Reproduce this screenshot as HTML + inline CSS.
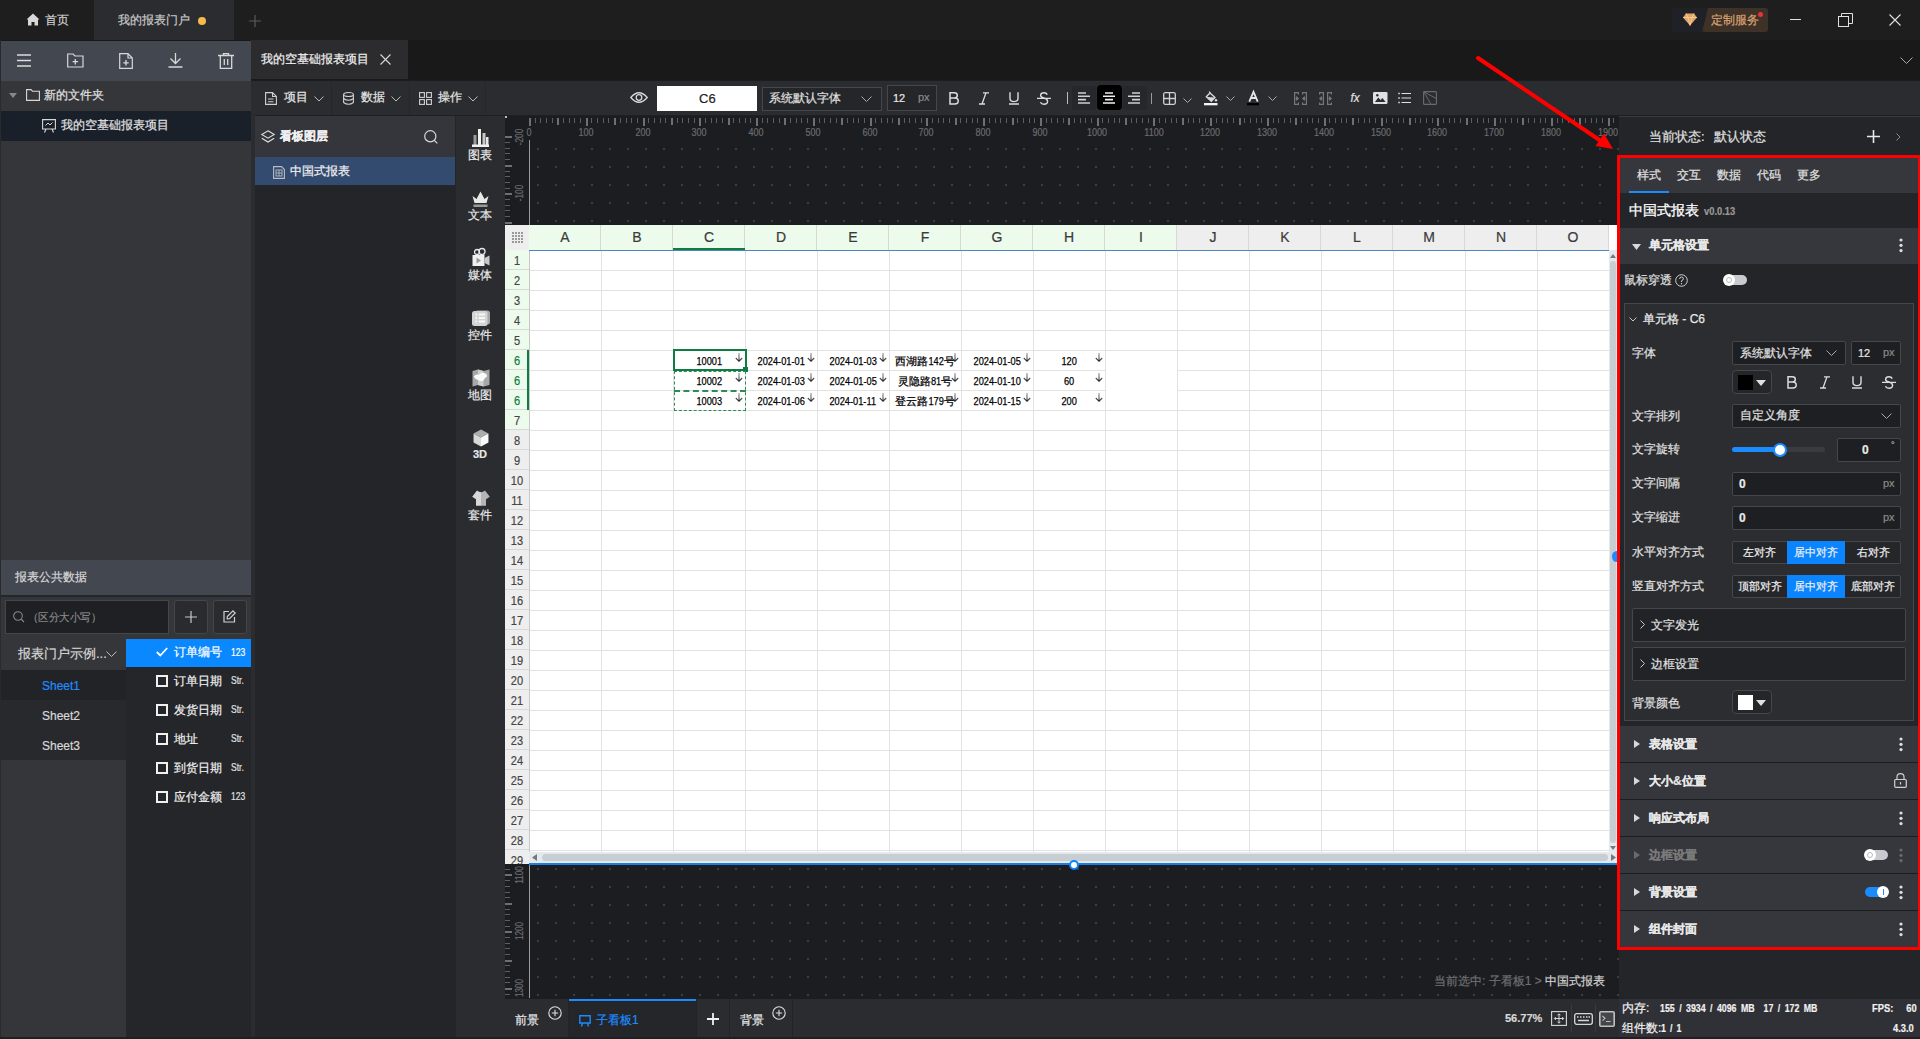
<!DOCTYPE html>
<html><head><meta charset="utf-8">
<style>
*{box-sizing:border-box;margin:0;padding:0}
html,body{width:1920px;height:1039px;overflow:hidden;background:#1c1d20;font-family:"Liberation Sans",sans-serif;font-size:12px;color:#e6e6e6;position:relative}
.a{position:absolute}
.t{position:absolute;white-space:nowrap;line-height:1;-webkit-text-stroke:0.2px currentColor}
svg{position:absolute;overflow:visible}
</style></head><body>
<!-- TITLE BAR -->
<div class="a" style="left:0;top:0;width:1920px;height:40px;background:#1e1e1f"></div>
<div class="a" style="left:94px;top:0;width:140px;height:40px;background:#2b2c30"></div>
<svg style="left:26px;top:13px" width="14" height="13" viewBox="0 0 14 13"><path d="M7 0.5 L13.5 6.5 L12 6.5 L12 12.5 L8.5 12.5 L8.5 9 L5.5 9 L5.5 12.5 L2 12.5 L2 6.5 L0.5 6.5 Z" fill="#d8d8d8"/></svg>
<div class="t" style="left:45px;top:14px;font-size:12px;color:#d0d0d0">首页</div>
<div class="t" style="left:118px;top:14px;font-size:12px;color:#c8c8c8">我的报表门户</div>
<div class="a" style="left:198px;top:17px;width:8px;height:8px;border-radius:50%;background:#f5bb4a"></div>
<svg style="left:249px;top:15px" width="12" height="12" viewBox="0 0 12 12"><path d="M6 0 V12 M0 6 H12" stroke="#5a5a5a" stroke-width="1.2"/></svg>
<div class="a" style="left:1672px;top:8px;width:40px;height:24px;background:#1f2127;border-radius:3px"></div>
<div class="a" style="left:1702px;top:8px;width:66px;height:24px;background:#3d3128;border-radius:3px;clip-path:polygon(6px 0,100% 0,100% 100%,0 100%)"></div>
<svg style="left:1683px;top:13px" width="14" height="13" viewBox="0 0 14 13"><path d="M3 0.5 L11 0.5 L14 4.5 L7 12.5 L0 4.5 Z" fill="#e3a56a"/><path d="M3 0.5 L5 4.5 L7 12.5 L9 4.5 L11 0.5 M0 4.5 L14 4.5" stroke="#f7cf9c" stroke-width="0.8" fill="none"/></svg>
<div class="t" style="left:1711px;top:14px;font-size:12px;color:#d9a474">定制服务</div>
<div class="a" style="left:1758px;top:12px;width:5px;height:5px;border-radius:50%;background:#e8323c"></div>
<div class="a" style="left:1790px;top:19px;width:11px;height:1px;background:#e0e0e0"></div>
<svg style="left:1838px;top:13px" width="15" height="14" viewBox="0 0 15 14"><rect x="0.5" y="3.5" width="10" height="10" fill="none" stroke="#e0e0e0"/><path d="M3.5 3.5 V0.5 H14.5 V10.5 H10.5" fill="none" stroke="#e0e0e0"/></svg>
<svg style="left:1889px;top:14px" width="12" height="12" viewBox="0 0 12 12"><path d="M0.5 0.5 L11.5 11.5 M11.5 0.5 L0.5 11.5" stroke="#e0e0e0" stroke-width="1.1"/></svg>
<!-- ROW2 -->
<div class="a" style="left:0;top:40px;width:1920px;height:40px;background:#19191a"></div>
<div class="a" style="left:251px;top:40px;width:157px;height:39px;background:#2c2c2f"></div>
<div class="t" style="left:261px;top:53px;font-size:12px;color:#f0f0f0">我的空基础报表项目</div>
<svg style="left:380px;top:54px" width="11" height="11" viewBox="0 0 11 11"><path d="M0.5 0.5 L10.5 10.5 M10.5 0.5 L0.5 10.5" stroke="#d8d8d8" stroke-width="1.1"/></svg>
<svg style="left:1900px;top:57px" width="13" height="8" viewBox="0 0 13 8"><path d="M0.5 0.5 L6.5 6.5 L12.5 0.5" stroke="#aaa" fill="none"/></svg>
<!-- TOOLBAR -->
<div class="a" style="left:254px;top:81px;width:1666px;height:34px;background:#2b2c30"></div>
<div class="a" style="left:254px;top:115px;width:1666px;height:1px;background:#1e1f22"></div>
<!-- LEFT PANEL -->
<div class="a" style="left:0;top:40px;width:1px;height:999px;background:#2a2a2c"></div>
<div class="a" style="left:1px;top:41px;width:250px;height:40px;background:#434750"></div>
<div class="a" style="left:1px;top:81px;width:250px;height:479px;background:#35363a"></div>
<div class="a" style="left:1px;top:111px;width:250px;height:30px;background:#19202a"></div>
<!-- left toolbar icons -->
<svg style="left:17px;top:54px" width="15" height="13" viewBox="0 0 15 13"><path d="M0 1 H14 M0 6.5 H14 M0 12 H14" stroke="#dcdcdc" stroke-width="1.3"/></svg>
<svg style="left:67px;top:53px" width="17" height="15" viewBox="0 0 17 15"><path d="M0.7 1 H6 L8 3 H16 V14 H0.7 Z" fill="none" stroke="#d8d8d8" stroke-width="1.2"/><path d="M8.3 6 V11.5 M5.6 8.7 H11" stroke="#d8d8d8" stroke-width="1.3"/></svg>
<svg style="left:119px;top:53px" width="14" height="16" viewBox="0 0 14 16"><path d="M0.7 0.7 H9 L13.3 5 V15.3 H0.7 Z M9 0.7 V5 H13.3" fill="none" stroke="#d8d8d8" stroke-width="1.2"/><path d="M7 7 V12.5 M4.3 9.8 H9.7" stroke="#d8d8d8" stroke-width="1.3"/></svg>
<svg style="left:168px;top:53px" width="15" height="15" viewBox="0 0 15 15"><path d="M7.5 0 V10 M2.5 5.5 L7.5 10.5 L12.5 5.5 M0.5 14 H14.5" fill="none" stroke="#d8d8d8" stroke-width="1.3"/></svg>
<svg style="left:218px;top:53px" width="16" height="16" viewBox="0 0 16 16"><path d="M0 2.5 H16 M5.5 2.5 V0.7 H10.5 V2.5 M2.3 2.5 V15.3 H13.7 V2.5 M6.3 6 V12 M9.7 6 V12" fill="none" stroke="#d8d8d8" stroke-width="1.3"/></svg>
<!-- tree -->
<svg style="left:9px;top:93px" width="8" height="5" viewBox="0 0 8 5"><path d="M0 0 H8 L4 5 Z" fill="#888"/></svg>
<svg style="left:26px;top:89px" width="14" height="12" viewBox="0 0 14 12"><path d="M0.6 0.6 H5 L6.5 2.2 H13.4 V11.4 H0.6 Z" fill="none" stroke="#d8d8d8" stroke-width="1.1"/></svg>
<div class="t" style="left:44px;top:89px;font-size:12px;color:#e0e0e0">新的文件夹</div>
<svg style="left:42px;top:119px" width="14" height="14" viewBox="0 0 14 14"><path d="M0.6 0.6 H13.4 V10 H0.6 Z M4 10 L2.5 13.5 M10 10 L11.5 13.5" fill="none" stroke="#d8d8d8" stroke-width="1.1"/><path d="M3.5 6.5 L6 4 L8 6 L10.5 3.5" fill="none" stroke="#d8d8d8" stroke-width="1"/></svg>
<div class="t" style="left:61px;top:119px;font-size:12px;color:#e0e0e0">我的空基础报表项目</div>
<!-- public data -->
<div class="a" style="left:1px;top:560px;width:250px;height:35px;background:#434750"></div>
<div class="t" style="left:15px;top:571px;font-size:12px;color:#d8d8d8">报表公共数据</div>
<div class="a" style="left:1px;top:595px;width:250px;height:2px;background:#25262a"></div>
<div class="a" style="left:1px;top:597px;width:250px;height:442px;background:#35363a"></div>
<div class="a" style="left:5px;top:600px;width:164px;height:34px;background:#1f2023;border:1px solid #45464b"></div>
<svg style="left:13px;top:611px" width="12" height="12" viewBox="0 0 12 12"><circle cx="5" cy="5" r="4.3" fill="none" stroke="#888" stroke-width="1.1"/><path d="M8.2 8.2 L11 11" stroke="#888" stroke-width="1.1"/></svg>
<div class="t" style="left:28px;top:612px;font-size:11px;color:#8a8a8a;transform:scaleX(0.95);transform-origin:left">（区分大小写）</div>
<div class="a" style="left:174px;top:600px;width:34px;height:34px;background:#2a2b2f;border:1px solid #45464b;border-radius:3px"></div>
<svg style="left:185px;top:611px" width="12" height="12" viewBox="0 0 12 12"><path d="M6 0 V12 M0 6 H12" stroke="#c8c8c8" stroke-width="1.2"/></svg>
<div class="a" style="left:213px;top:600px;width:34px;height:34px;background:#2a2b2f;border:1px solid #45464b;border-radius:3px"></div>
<svg style="left:223px;top:610px" width="13" height="13" viewBox="0 0 13 13"><path d="M6 1.5 H1 V12 H11.5 V7" fill="none" stroke="#d0d0d0" stroke-width="1.2"/><path d="M10 0.8 L12.2 3 L6.5 8.7 L4.2 8.8 L4.3 6.5 Z" fill="none" stroke="#d0d0d0" stroke-width="1.2"/></svg>
<div class="a" style="left:1px;top:639px;width:125px;height:31px;background:#35363a"></div>
<div class="t" style="left:18px;top:647px;font-size:13px;color:#d8d8d8">报表门户示例...</div>
<svg style="left:106px;top:651px" width="11" height="6" viewBox="0 0 11 6"><path d="M0.5 0.5 L5.5 5.5 L10.5 0.5" stroke="#bbb" fill="none"/></svg>
<div class="a" style="left:1px;top:670px;width:125px;height:30px;background:#222327"></div>
<div class="a" style="left:1px;top:700px;width:125px;height:60px;background:#28292d"></div>
<div class="t" style="left:42px;top:680px;font-size:12px;color:#1f8cff">Sheet1</div>
<div class="t" style="left:42px;top:710px;font-size:12px;color:#d8d8d8">Sheet2</div>
<div class="t" style="left:42px;top:740px;font-size:12px;color:#d8d8d8">Sheet3</div>
<div class="a" style="left:126px;top:639px;width:125px;height:400px;background:#25262a"></div>
<div class="a" style="left:126px;top:639px;width:125px;height:28px;background:#0a88ff"></div>
<svg style="left:156px;top:647px" width="12" height="10" viewBox="0 0 12 10"><path d="M0.8 5 L4.3 8.5 L11.2 1" stroke="#fff" stroke-width="1.8" fill="none"/></svg>
<div class="t" style="left:174px;top:646px;font-size:12px;color:#fff">订单编号</div>
<div class="t" style="left:231px;top:647px;font-size:11px;color:#fff;transform:scaleX(0.78);transform-origin:left">123</div>
<div class="a" style="left:156px;top:675px;width:12px;height:12px;border:2px solid #f0f0f0"></div>
<div class="t" style="left:174px;top:675px;font-size:12px;color:#f0f0f0">订单日期</div>
<div class="t" style="left:231px;top:675px;font-size:11px;color:#e0e0e0;transform:scaleX(0.78);transform-origin:left">Str.</div>
<div class="a" style="left:156px;top:704px;width:12px;height:12px;border:2px solid #f0f0f0"></div>
<div class="t" style="left:174px;top:704px;font-size:12px;color:#f0f0f0">发货日期</div>
<div class="t" style="left:231px;top:704px;font-size:11px;color:#e0e0e0;transform:scaleX(0.78);transform-origin:left">Str.</div>
<div class="a" style="left:156px;top:733px;width:12px;height:12px;border:2px solid #f0f0f0"></div>
<div class="t" style="left:174px;top:733px;font-size:12px;color:#f0f0f0">地址</div>
<div class="t" style="left:231px;top:733px;font-size:11px;color:#e0e0e0;transform:scaleX(0.78);transform-origin:left">Str.</div>
<div class="a" style="left:156px;top:762px;width:12px;height:12px;border:2px solid #f0f0f0"></div>
<div class="t" style="left:174px;top:762px;font-size:12px;color:#f0f0f0">到货日期</div>
<div class="t" style="left:231px;top:762px;font-size:11px;color:#e0e0e0;transform:scaleX(0.78);transform-origin:left">Str.</div>
<div class="a" style="left:156px;top:791px;width:12px;height:12px;border:2px solid #f0f0f0"></div>
<div class="t" style="left:174px;top:791px;font-size:12px;color:#f0f0f0">应付金额</div>
<div class="t" style="left:231px;top:791px;font-size:11px;color:#e0e0e0;transform:scaleX(0.78);transform-origin:left">123</div>
<!-- TOOLBAR content -->
<div class="a" style="left:251px;top:81px;width:4px;height:958px;background:#2b2c30"></div>
<svg style="left:265px;top:92px" width="12" height="13" viewBox="0 0 12 13"><path d="M0.6 0.6 H7.5 L11.4 4.5 V12.4 H0.6 Z M7.5 0.6 V4.5 H11.4 M3 7 H8.5 M3 9.7 H8.5" fill="none" stroke="#d0d0d0" stroke-width="1.1"/></svg>
<div class="t" style="left:284px;top:91px;font-size:12px;color:#e6e6e6">项目</div>
<svg style="left:314px;top:96px" width="10" height="6" viewBox="0 0 10 6"><path d="M0.5 0.5 L5 5 L9.5 0.5" stroke="#bbb" fill="none"/></svg>
<div class="a" style="left:331px;top:81px;width:1px;height:34px;background:#26272a"></div>
<svg style="left:343px;top:92px" width="11" height="13" viewBox="0 0 11 13"><ellipse cx="5.5" cy="2.5" rx="4.9" ry="2" fill="none" stroke="#d0d0d0" stroke-width="1.1"/><path d="M0.6 2.5 V10.5 Q5.5 14 10.4 10.5 V2.5 M0.6 6.5 Q5.5 10 10.4 6.5" fill="none" stroke="#d0d0d0" stroke-width="1.1"/></svg>
<div class="t" style="left:361px;top:91px;font-size:12px;color:#e6e6e6">数据</div>
<svg style="left:391px;top:96px" width="10" height="6" viewBox="0 0 10 6"><path d="M0.5 0.5 L5 5 L9.5 0.5" stroke="#bbb" fill="none"/></svg>
<div class="a" style="left:409px;top:81px;width:1px;height:34px;background:#26272a"></div>
<svg style="left:419px;top:92px" width="13" height="13" viewBox="0 0 13 13"><rect x="0.6" y="0.6" width="4.8" height="4.8" fill="none" stroke="#d0d0d0" stroke-width="1.1"/><rect x="7.6" y="0.6" width="4.8" height="4.8" fill="none" stroke="#d0d0d0" stroke-width="1.1"/><rect x="0.6" y="7.6" width="4.8" height="4.8" fill="none" stroke="#d0d0d0" stroke-width="1.1"/><rect x="7.6" y="7.6" width="4.8" height="4.8" fill="none" stroke="#d0d0d0" stroke-width="1.1"/></svg>
<div class="t" style="left:438px;top:91px;font-size:12px;color:#e6e6e6">操作</div>
<svg style="left:468px;top:96px" width="10" height="6" viewBox="0 0 10 6"><path d="M0.5 0.5 L5 5 L9.5 0.5" stroke="#bbb" fill="none"/></svg>
<div class="a" style="left:485px;top:81px;width:1px;height:34px;background:#26272a"></div>
<!-- eye + cell ref -->
<svg style="left:630px;top:91px" width="18" height="13" viewBox="0 0 18 13"><path d="M0.8 6.5 Q9 -3 17.2 6.5 Q9 16 0.8 6.5 Z" fill="none" stroke="#d8d8d8" stroke-width="1.3"/><circle cx="9" cy="6.5" r="2.8" fill="none" stroke="#d8d8d8" stroke-width="1.3"/></svg>
<div class="a" style="left:657px;top:86px;width:100px;height:25px;background:#ffffff"></div>
<div class="t" style="left:699px;top:92px;font-size:13px;color:#222">C6</div>
<div class="a" style="left:762px;top:87px;width:120px;height:24px;border:1px solid #46474c;background:#25262a"></div>
<div class="t" style="left:769px;top:92px;font-size:12px;color:#e0e0e0">系统默认字体</div>
<svg style="left:861px;top:96px" width="11" height="6" viewBox="0 0 11 6"><path d="M0.5 0.5 L5.5 5.5 L10.5 0.5" stroke="#aaa" fill="none"/></svg>
<div class="a" style="left:887px;top:85px;width:50px;height:26px;border:1px solid #46474c;background:#25262a"></div>
<div class="t" style="left:893px;top:93px;font-size:11px;color:#e8e8e8">12</div>
<div class="t" style="left:918px;top:92px;font-size:11px;color:#8a8a8a">px</div>
<svg style="left:949px;top:92px" width="10" height="13" viewBox="0 0 10 13"><path d="M1 0.8 H5.3 Q8.3 0.8 8.3 3.5 Q8.3 6 5.3 6 H1 Z M1 6 H5.8 Q9.2 6 9.2 9 Q9.2 12 5.8 12 H1 Z" fill="none" stroke="#dcdcdc" stroke-width="1.5"/></svg>
<svg style="left:979px;top:92px" width="11" height="13" viewBox="0 0 11 13"><path d="M4 0.8 H10 M0 12 H6 M7 0.8 L3 12" fill="none" stroke="#dcdcdc" stroke-width="1.3"/></svg>
<svg style="left:1009px;top:92px" width="10" height="13" viewBox="0 0 10 13"><path d="M1 0.2 V6.5 Q1 9.6 5 9.6 Q9 9.6 9 6.5 V0.2 M0 12 H10" fill="none" stroke="#dcdcdc" stroke-width="1.4"/></svg>
<svg style="left:1037px;top:92px" width="14" height="13" viewBox="0 0 14 13"><path d="M10.3 2.6 Q9.3 0.7 7 0.7 Q3.6 0.7 3.6 3.2 Q3.6 5.2 7 6 Q10.6 7 10.6 9.3 Q10.6 12.2 7 12.2 Q4.3 12.2 3.4 10.2 M0 6.4 H14" fill="none" stroke="#dcdcdc" stroke-width="1.4"/></svg>
<div class="a" style="left:1067px;top:92px;width:1px;height:12px;background:#bbb"></div>
<div class="a" style="left:1072px;top:86px;width:24px;height:24px;background:#26272b;border-radius:4px"></div>
<div class="a" style="left:1097px;top:85px;width:25px;height:25px;background:#000;border-radius:4px"></div>
<div class="a" style="left:1123px;top:86px;width:24px;height:24px;background:#26272b;border-radius:4px"></div>
<svg style="left:1077px;top:92px" width="14" height="12" viewBox="0 0 14 12"><path d="M1 1 H9 M1 4.3 H13 M1 7.6 H9 M1 11 H13" stroke="#d0d0d0" stroke-width="1.6"/></svg>
<svg style="left:1102px;top:92px" width="14" height="12" viewBox="0 0 14 12"><path d="M3 1 H11 M1 4.3 H13 M3 7.6 H11 M1 11 H13" stroke="#f0f0f0" stroke-width="1.6"/></svg>
<svg style="left:1127px;top:92px" width="14" height="12" viewBox="0 0 14 12"><path d="M5 1 H13 M1 4.3 H13 M5 7.6 H13 M1 11 H13" stroke="#d0d0d0" stroke-width="1.6"/></svg>
<div class="a" style="left:1151px;top:93px;width:1px;height:11px;background:#999"></div>
<svg style="left:1163px;top:92px" width="13" height="13" viewBox="0 0 13 13"><rect x="0.7" y="0.7" width="11.6" height="11.6" rx="1.5" fill="none" stroke="#d0d0d0" stroke-width="1.3"/><path d="M6.5 0.7 V12.3 M0.7 6.5 H12.3" stroke="#d0d0d0" stroke-width="1.3"/></svg>
<svg style="left:1183px;top:98px" width="9" height="5" viewBox="0 0 9 5"><path d="M0.5 0.5 L4.5 4.5 L8.5 0.5" stroke="#aaa" fill="none"/></svg>
<svg style="left:1204px;top:91px" width="14" height="15" viewBox="0 0 14 15"><path d="M5.2 0.5 L6.3 2" stroke="#dcdcdc" stroke-width="1.2"/><path d="M6 2 L11 6.6 L7.3 10.3 L2.3 5.7 Z" fill="none" stroke="#dcdcdc" stroke-width="1.3"/><path d="M2.6 6 L10.7 6.6 L7.3 10 Z" fill="#dcdcdc"/><circle cx="12" cy="9.3" r="1.2" fill="#dcdcdc"/><rect x="0" y="12" width="13.5" height="2.3" fill="#f4f4f4"/></svg>
<svg style="left:1226px;top:96px" width="9" height="5" viewBox="0 0 9 5"><path d="M0.5 0.5 L4.5 4.5 L8.5 0.5" stroke="#aaa" fill="none"/></svg>
<svg style="left:1247px;top:91px" width="13" height="15" viewBox="0 0 13 15"><path d="M2.3 10.6 L6.5 0.8 L10.7 10.6 M4 7 H9" fill="none" stroke="#e6e6e6" stroke-width="1.8"/><rect x="0" y="12" width="12" height="2.3" fill="#000"/></svg>
<svg style="left:1268px;top:96px" width="9" height="5" viewBox="0 0 9 5"><path d="M0.5 0.5 L4.5 4.5 L8.5 0.5" stroke="#aaa" fill="none"/></svg>
<svg style="left:1294px;top:92px" width="13" height="13" viewBox="0 0 13 13"><path d="M4.4 2.6 V0.6 H0.6 V12.4 H4.4 V10.4 M8.6 2.6 V0.6 H12.4 V12.4 H8.6 V10.4" fill="none" stroke="#76777c" stroke-width="1.2"/><path d="M1.4 6.5 H3 M2.6 4.6 L4.6 6.5 L2.6 8.4 Z M11.6 6.5 H10 M10.4 4.6 L8.4 6.5 L10.4 8.4 Z" fill="#76777c" stroke="#76777c" stroke-width="0.9"/></svg>
<svg style="left:1319px;top:92px" width="13" height="13" viewBox="0 0 13 13"><path d="M0.6 2.6 V0.6 H4.4 V12.4 H0.6 V10.4 M12.4 2.6 V0.6 H8.6 V12.4 H12.4 V10.4" fill="none" stroke="#76777c" stroke-width="1.2"/><path d="M3.6 6.5 H2 M2.4 4.6 L0.4 6.5 L2.4 8.4 Z M9.4 6.5 H11 M10.6 4.6 L12.6 6.5 L10.6 8.4 Z" fill="#76777c" stroke="#76777c" stroke-width="0.9"/></svg>
<div class="t" style="left:1350px;top:91px;font-size:13px;color:#e0e0e0;font-style:italic;transform:scaleX(0.9)">fx</div>
<svg style="left:1373px;top:92px" width="15" height="12" viewBox="0 0 15 12"><rect x="0" y="0" width="14.5" height="12" rx="1.2" fill="#e0e0e0"/><path d="M2 10 L5.3 5.5 L7.5 8 L9.5 6 L12.5 10 Z" fill="#2b2c30"/><circle cx="4.3" cy="3.3" r="1.2" fill="#2b2c30"/></svg>
<svg style="left:1398px;top:92px" width="14" height="12" viewBox="0 0 14 12"><path d="M0.3 1.5 H1.8 M0.3 6 H1.8 M0.3 10.5 H1.8" stroke="#e0e0e0" stroke-width="1.4"/><path d="M3.5 1.5 H13 M3.5 6 H13 M3.5 10.5 H13" stroke="#e0e0e0" stroke-width="1.2"/></svg>
<svg style="left:1423px;top:91px" width="14" height="14" viewBox="0 0 14 14"><rect x="0.6" y="0.6" width="12.8" height="12.8" rx="1" fill="none" stroke="#6a6b70" stroke-width="1.1"/><path d="M0.8 0.8 L13.3 7.5 M0.8 0.8 L8 13.3" stroke="#6a6b70" stroke-width="1"/></svg>
<!-- LAYER PANEL -->
<div class="a" style="left:255px;top:116px;width:201px;height:923px;background:#242528"></div>
<div class="a" style="left:255px;top:116px;width:200px;height:41px;background:#35363b"></div>
<svg style="left:261px;top:130px" width="14" height="14" viewBox="0 0 14 14"><path d="M7 0.8 L13.2 4.5 L7 8.2 L0.8 4.5 Z" fill="none" stroke="#e0e0e0" stroke-width="1.1"/><path d="M0.8 8.2 L7 12 L13.2 8.2" fill="none" stroke="#e0e0e0" stroke-width="1.1"/></svg>
<div class="t" style="left:280px;top:130px;font-size:12px;color:#f0f0f0;font-weight:bold">看板图层</div>
<svg style="left:424px;top:130px" width="14" height="14" viewBox="0 0 14 14"><circle cx="6.3" cy="6.3" r="5.6" fill="none" stroke="#d8d8d8" stroke-width="1.2"/><path d="M10.3 10.3 L13.3 13.3" stroke="#d8d8d8" stroke-width="1.2"/></svg>
<div class="a" style="left:255px;top:157px;width:200px;height:28px;background:#344b70"></div>
<svg style="left:273px;top:166px" width="12" height="13" viewBox="0 0 12 13"><path d="M0.6 0.6 H8.5 L11.4 3.5 V12.4 H0.6 Z" fill="none" stroke="#b8bcc4" stroke-width="1.1"/><rect x="3" y="4" width="6" height="6" fill="none" stroke="#b8bcc4" stroke-width="0.9"/><path d="M6 4 V10 M3 7 H9" stroke="#b8bcc4" stroke-width="0.9"/></svg>
<div class="t" style="left:290px;top:165px;font-size:12px;color:#f0f0f0">中国式报表</div>
<!-- ICON STRIP -->
<div class="a" style="left:456px;top:116px;width:49px;height:923px;background:#2b2c30"></div>
<!-- icon strip items -->
<svg style="left:472px;top:128px" width="17" height="19" viewBox="0 0 17 19"><rect x="1.5" y="7" width="3" height="10" fill="#9a9a9a"/><rect x="6" y="1" width="3" height="16" fill="#f0f0f0"/><rect x="10.5" y="5" width="3" height="12" fill="#c8c8c8"/><rect x="14" y="9" width="2.5" height="8" fill="#e8e8e8"/><rect x="0" y="16.5" width="17" height="2.5" fill="#f0f0f0"/></svg>
<div class="t" style="left:468px;top:149px;font-size:12px;color:#e8e8e8">图表</div>
<svg style="left:472px;top:191px" width="17" height="17" viewBox="0 0 17 17"><path d="M0.5 5 L4.5 8 L8.5 0.5 L12.5 8 L16.5 5 L14.5 12 H2.5 Z" fill="#e8e8e8"/><rect x="1.5" y="13.5" width="14" height="2.5" fill="#9a9a9a"/></svg>
<div class="t" style="left:468px;top:209px;font-size:12px;color:#e8e8e8">文本</div>
<svg style="left:472px;top:248px" width="18" height="19" viewBox="0 0 18 19"><circle cx="5" cy="4" r="2.5" fill="none" stroke="#e8e8e8" stroke-width="1.3"/><circle cx="10" cy="3.5" r="3" fill="none" stroke="#e8e8e8" stroke-width="1.3"/><rect x="0.5" y="7" width="12" height="11" fill="#f0f0f0"/><path d="M12.5 10 L17.5 7.5 V17.5 L12.5 15 Z" fill="#c8c8c8"/><path d="M4.5 9.5 L9 12.5 L4.5 15.5 Z" fill="#9a9a9a"/></svg>
<div class="t" style="left:468px;top:269px;font-size:12px;color:#e8e8e8">媒体</div>
<svg style="left:472px;top:310px" width="18" height="16" viewBox="0 0 18 16"><rect x="3" y="0.5" width="15" height="14" rx="2.5" fill="#a8a8a8"/><rect x="0" y="1" width="15.5" height="15" rx="2.5" fill="#d4d4d4"/><path d="M3.5 4.5 H5 M3.5 8 H5 M3.5 11.5 H5 M6.8 4.5 H13 M6.8 8 H13 M6.8 11.5 H13" stroke="#f8f8f8" stroke-width="1.8"/></svg>
<div class="t" style="left:468px;top:329px;font-size:12px;color:#e8e8e8">控件</div>
<svg style="left:472px;top:369px" width="18" height="18" viewBox="0 0 18 18"><path d="M0.5 2 L6 0.5 L11.5 2 L17.5 0.5 V16 L11.5 17.5 L6 16 L0.5 17.5 Z" fill="#a8a8a8"/><path d="M6 0.5 L11.5 2 V17.5 L6 16 Z" fill="#cfcfcf"/><path d="M1.8 7.5 Q3.5 5 7 5.8 Q9.5 3 12.8 4.2 Q15.5 5 14.8 7.8 Q12.5 9 11.5 11.2 Q8.5 13 6.2 11 Q3 10.5 1.8 7.5 Z" fill="#fafafa"/></svg>
<div class="t" style="left:468px;top:389px;font-size:12px;color:#e8e8e8">地图</div>
<svg style="left:473px;top:429px" width="16" height="18" viewBox="0 0 15 16" preserveAspectRatio="none"><path d="M7.5 0.5 L14.5 4 L7.5 7.5 L0.5 4 Z" fill="#acacac"/><path d="M0.5 4 L7.5 7.5 V15.5 L0.5 12 Z" fill="#d8d8d8"/><path d="M14.5 4 L7.5 7.5 V15.5 L14.5 12 Z" fill="#fafafa"/></svg>
<div class="t" style="left:473px;top:449px;font-size:11px;color:#e8e8e8;font-weight:bold">3D</div>
<svg style="left:472px;top:490px" width="18" height="16" viewBox="0 0 18 16"><defs><clipPath id="tsh"><path d="M5 0.5 Q9 3.8 13 0.5 L17.8 6.8 L14 9.2 V15.8 H4 V9.2 L0.2 6.8 Z"/></clipPath></defs><g clip-path="url(#tsh)"><rect x="0" y="0" width="9" height="16" fill="#d8d8d8"/><rect x="9" y="0" width="9" height="16" fill="#b4b4b4"/></g></svg>
<div class="t" style="left:468px;top:509px;font-size:12px;color:#e8e8e8">套件</div>
<div class="a" style="left:505px;top:116px;width:1114px;height:883px;background:#1c1d20"></div>
<svg style="left:530px;top:140px" width="1090" height="859"><defs><pattern id="dp" x="7" y="8" width="18" height="18" patternUnits="userSpaceOnUse"><rect x="0" y="0" width="2" height="2" fill="#3c3d41"/></pattern></defs><rect width="1090" height="859" fill="url(#dp)"/></svg>
<svg style="left:505px;top:116px" width="1112" height="12"><rect x="24" y="2" width="2" height="8" fill="#6e6f73"/><rect x="30" y="2" width="1" height="5" fill="#5d5e62"/><rect x="35" y="2" width="1" height="5" fill="#5d5e62"/><rect x="41" y="2" width="1" height="5" fill="#5d5e62"/><rect x="47" y="2" width="1" height="5" fill="#5d5e62"/><rect x="52" y="2" width="2" height="7" fill="#6e6f73"/><rect x="58" y="2" width="1" height="5" fill="#5d5e62"/><rect x="64" y="2" width="1" height="5" fill="#5d5e62"/><rect x="69" y="2" width="1" height="5" fill="#5d5e62"/><rect x="75" y="2" width="1" height="5" fill="#5d5e62"/><rect x="81" y="2" width="2" height="8" fill="#6e6f73"/><rect x="86" y="2" width="1" height="5" fill="#5d5e62"/><rect x="92" y="2" width="1" height="5" fill="#5d5e62"/><rect x="98" y="2" width="1" height="5" fill="#5d5e62"/><rect x="103" y="2" width="1" height="5" fill="#5d5e62"/><rect x="109" y="2" width="2" height="7" fill="#6e6f73"/><rect x="115" y="2" width="1" height="5" fill="#5d5e62"/><rect x="121" y="2" width="1" height="5" fill="#5d5e62"/><rect x="126" y="2" width="1" height="5" fill="#5d5e62"/><rect x="132" y="2" width="1" height="5" fill="#5d5e62"/><rect x="138" y="2" width="2" height="8" fill="#6e6f73"/><rect x="143" y="2" width="1" height="5" fill="#5d5e62"/><rect x="149" y="2" width="1" height="5" fill="#5d5e62"/><rect x="155" y="2" width="1" height="5" fill="#5d5e62"/><rect x="160" y="2" width="1" height="5" fill="#5d5e62"/><rect x="166" y="2" width="2" height="7" fill="#6e6f73"/><rect x="172" y="2" width="1" height="5" fill="#5d5e62"/><rect x="177" y="2" width="1" height="5" fill="#5d5e62"/><rect x="183" y="2" width="1" height="5" fill="#5d5e62"/><rect x="189" y="2" width="1" height="5" fill="#5d5e62"/><rect x="194" y="2" width="2" height="8" fill="#6e6f73"/><rect x="200" y="2" width="1" height="5" fill="#5d5e62"/><rect x="206" y="2" width="1" height="5" fill="#5d5e62"/><rect x="211" y="2" width="1" height="5" fill="#5d5e62"/><rect x="217" y="2" width="1" height="5" fill="#5d5e62"/><rect x="223" y="2" width="2" height="7" fill="#6e6f73"/><rect x="228" y="2" width="1" height="5" fill="#5d5e62"/><rect x="234" y="2" width="1" height="5" fill="#5d5e62"/><rect x="240" y="2" width="1" height="5" fill="#5d5e62"/><rect x="245" y="2" width="1" height="5" fill="#5d5e62"/><rect x="251" y="2" width="2" height="8" fill="#6e6f73"/><rect x="257" y="2" width="1" height="5" fill="#5d5e62"/><rect x="262" y="2" width="1" height="5" fill="#5d5e62"/><rect x="268" y="2" width="1" height="5" fill="#5d5e62"/><rect x="274" y="2" width="1" height="5" fill="#5d5e62"/><rect x="279" y="2" width="2" height="7" fill="#6e6f73"/><rect x="285" y="2" width="1" height="5" fill="#5d5e62"/><rect x="291" y="2" width="1" height="5" fill="#5d5e62"/><rect x="296" y="2" width="1" height="5" fill="#5d5e62"/><rect x="302" y="2" width="1" height="5" fill="#5d5e62"/><rect x="308" y="2" width="2" height="8" fill="#6e6f73"/><rect x="314" y="2" width="1" height="5" fill="#5d5e62"/><rect x="319" y="2" width="1" height="5" fill="#5d5e62"/><rect x="325" y="2" width="1" height="5" fill="#5d5e62"/><rect x="331" y="2" width="1" height="5" fill="#5d5e62"/><rect x="336" y="2" width="2" height="7" fill="#6e6f73"/><rect x="342" y="2" width="1" height="5" fill="#5d5e62"/><rect x="348" y="2" width="1" height="5" fill="#5d5e62"/><rect x="353" y="2" width="1" height="5" fill="#5d5e62"/><rect x="359" y="2" width="1" height="5" fill="#5d5e62"/><rect x="365" y="2" width="2" height="8" fill="#6e6f73"/><rect x="370" y="2" width="1" height="5" fill="#5d5e62"/><rect x="376" y="2" width="1" height="5" fill="#5d5e62"/><rect x="382" y="2" width="1" height="5" fill="#5d5e62"/><rect x="387" y="2" width="1" height="5" fill="#5d5e62"/><rect x="393" y="2" width="2" height="7" fill="#6e6f73"/><rect x="399" y="2" width="1" height="5" fill="#5d5e62"/><rect x="404" y="2" width="1" height="5" fill="#5d5e62"/><rect x="410" y="2" width="1" height="5" fill="#5d5e62"/><rect x="416" y="2" width="1" height="5" fill="#5d5e62"/><rect x="421" y="2" width="2" height="8" fill="#6e6f73"/><rect x="427" y="2" width="1" height="5" fill="#5d5e62"/><rect x="433" y="2" width="1" height="5" fill="#5d5e62"/><rect x="438" y="2" width="1" height="5" fill="#5d5e62"/><rect x="444" y="2" width="1" height="5" fill="#5d5e62"/><rect x="450" y="2" width="2" height="7" fill="#6e6f73"/><rect x="455" y="2" width="1" height="5" fill="#5d5e62"/><rect x="461" y="2" width="1" height="5" fill="#5d5e62"/><rect x="467" y="2" width="1" height="5" fill="#5d5e62"/><rect x="472" y="2" width="1" height="5" fill="#5d5e62"/><rect x="478" y="2" width="2" height="8" fill="#6e6f73"/><rect x="484" y="2" width="1" height="5" fill="#5d5e62"/><rect x="490" y="2" width="1" height="5" fill="#5d5e62"/><rect x="495" y="2" width="1" height="5" fill="#5d5e62"/><rect x="501" y="2" width="1" height="5" fill="#5d5e62"/><rect x="507" y="2" width="2" height="7" fill="#6e6f73"/><rect x="512" y="2" width="1" height="5" fill="#5d5e62"/><rect x="518" y="2" width="1" height="5" fill="#5d5e62"/><rect x="524" y="2" width="1" height="5" fill="#5d5e62"/><rect x="529" y="2" width="1" height="5" fill="#5d5e62"/><rect x="535" y="2" width="2" height="8" fill="#6e6f73"/><rect x="541" y="2" width="1" height="5" fill="#5d5e62"/><rect x="546" y="2" width="1" height="5" fill="#5d5e62"/><rect x="552" y="2" width="1" height="5" fill="#5d5e62"/><rect x="558" y="2" width="1" height="5" fill="#5d5e62"/><rect x="563" y="2" width="2" height="7" fill="#6e6f73"/><rect x="569" y="2" width="1" height="5" fill="#5d5e62"/><rect x="575" y="2" width="1" height="5" fill="#5d5e62"/><rect x="580" y="2" width="1" height="5" fill="#5d5e62"/><rect x="586" y="2" width="1" height="5" fill="#5d5e62"/><rect x="592" y="2" width="2" height="8" fill="#6e6f73"/><rect x="597" y="2" width="1" height="5" fill="#5d5e62"/><rect x="603" y="2" width="1" height="5" fill="#5d5e62"/><rect x="609" y="2" width="1" height="5" fill="#5d5e62"/><rect x="614" y="2" width="1" height="5" fill="#5d5e62"/><rect x="620" y="2" width="2" height="7" fill="#6e6f73"/><rect x="626" y="2" width="1" height="5" fill="#5d5e62"/><rect x="631" y="2" width="1" height="5" fill="#5d5e62"/><rect x="637" y="2" width="1" height="5" fill="#5d5e62"/><rect x="643" y="2" width="1" height="5" fill="#5d5e62"/><rect x="648" y="2" width="2" height="8" fill="#6e6f73"/><rect x="654" y="2" width="1" height="5" fill="#5d5e62"/><rect x="660" y="2" width="1" height="5" fill="#5d5e62"/><rect x="666" y="2" width="1" height="5" fill="#5d5e62"/><rect x="671" y="2" width="1" height="5" fill="#5d5e62"/><rect x="677" y="2" width="2" height="7" fill="#6e6f73"/><rect x="683" y="2" width="1" height="5" fill="#5d5e62"/><rect x="688" y="2" width="1" height="5" fill="#5d5e62"/><rect x="694" y="2" width="1" height="5" fill="#5d5e62"/><rect x="700" y="2" width="1" height="5" fill="#5d5e62"/><rect x="705" y="2" width="2" height="8" fill="#6e6f73"/><rect x="711" y="2" width="1" height="5" fill="#5d5e62"/><rect x="717" y="2" width="1" height="5" fill="#5d5e62"/><rect x="722" y="2" width="1" height="5" fill="#5d5e62"/><rect x="728" y="2" width="1" height="5" fill="#5d5e62"/><rect x="734" y="2" width="2" height="7" fill="#6e6f73"/><rect x="739" y="2" width="1" height="5" fill="#5d5e62"/><rect x="745" y="2" width="1" height="5" fill="#5d5e62"/><rect x="751" y="2" width="1" height="5" fill="#5d5e62"/><rect x="756" y="2" width="1" height="5" fill="#5d5e62"/><rect x="762" y="2" width="2" height="8" fill="#6e6f73"/><rect x="768" y="2" width="1" height="5" fill="#5d5e62"/><rect x="773" y="2" width="1" height="5" fill="#5d5e62"/><rect x="779" y="2" width="1" height="5" fill="#5d5e62"/><rect x="785" y="2" width="1" height="5" fill="#5d5e62"/><rect x="790" y="2" width="2" height="7" fill="#6e6f73"/><rect x="796" y="2" width="1" height="5" fill="#5d5e62"/><rect x="802" y="2" width="1" height="5" fill="#5d5e62"/><rect x="807" y="2" width="1" height="5" fill="#5d5e62"/><rect x="813" y="2" width="1" height="5" fill="#5d5e62"/><rect x="819" y="2" width="2" height="8" fill="#6e6f73"/><rect x="824" y="2" width="1" height="5" fill="#5d5e62"/><rect x="830" y="2" width="1" height="5" fill="#5d5e62"/><rect x="836" y="2" width="1" height="5" fill="#5d5e62"/><rect x="841" y="2" width="1" height="5" fill="#5d5e62"/><rect x="847" y="2" width="2" height="7" fill="#6e6f73"/><rect x="853" y="2" width="1" height="5" fill="#5d5e62"/><rect x="859" y="2" width="1" height="5" fill="#5d5e62"/><rect x="864" y="2" width="1" height="5" fill="#5d5e62"/><rect x="870" y="2" width="1" height="5" fill="#5d5e62"/><rect x="876" y="2" width="2" height="8" fill="#6e6f73"/><rect x="881" y="2" width="1" height="5" fill="#5d5e62"/><rect x="887" y="2" width="1" height="5" fill="#5d5e62"/><rect x="893" y="2" width="1" height="5" fill="#5d5e62"/><rect x="898" y="2" width="1" height="5" fill="#5d5e62"/><rect x="904" y="2" width="2" height="7" fill="#6e6f73"/><rect x="910" y="2" width="1" height="5" fill="#5d5e62"/><rect x="915" y="2" width="1" height="5" fill="#5d5e62"/><rect x="921" y="2" width="1" height="5" fill="#5d5e62"/><rect x="927" y="2" width="1" height="5" fill="#5d5e62"/><rect x="932" y="2" width="2" height="8" fill="#6e6f73"/><rect x="938" y="2" width="1" height="5" fill="#5d5e62"/><rect x="944" y="2" width="1" height="5" fill="#5d5e62"/><rect x="949" y="2" width="1" height="5" fill="#5d5e62"/><rect x="955" y="2" width="1" height="5" fill="#5d5e62"/><rect x="961" y="2" width="2" height="7" fill="#6e6f73"/><rect x="966" y="2" width="1" height="5" fill="#5d5e62"/><rect x="972" y="2" width="1" height="5" fill="#5d5e62"/><rect x="978" y="2" width="1" height="5" fill="#5d5e62"/><rect x="983" y="2" width="1" height="5" fill="#5d5e62"/><rect x="989" y="2" width="2" height="8" fill="#6e6f73"/><rect x="995" y="2" width="1" height="5" fill="#5d5e62"/><rect x="1000" y="2" width="1" height="5" fill="#5d5e62"/><rect x="1006" y="2" width="1" height="5" fill="#5d5e62"/><rect x="1012" y="2" width="1" height="5" fill="#5d5e62"/><rect x="1017" y="2" width="2" height="7" fill="#6e6f73"/><rect x="1023" y="2" width="1" height="5" fill="#5d5e62"/><rect x="1029" y="2" width="1" height="5" fill="#5d5e62"/><rect x="1035" y="2" width="1" height="5" fill="#5d5e62"/><rect x="1040" y="2" width="1" height="5" fill="#5d5e62"/><rect x="1046" y="2" width="2" height="8" fill="#6e6f73"/><rect x="1052" y="2" width="1" height="5" fill="#5d5e62"/><rect x="1057" y="2" width="1" height="5" fill="#5d5e62"/><rect x="1063" y="2" width="1" height="5" fill="#5d5e62"/><rect x="1069" y="2" width="1" height="5" fill="#5d5e62"/><rect x="1074" y="2" width="2" height="7" fill="#6e6f73"/><rect x="1080" y="2" width="1" height="5" fill="#5d5e62"/><rect x="1086" y="2" width="1" height="5" fill="#5d5e62"/><rect x="1091" y="2" width="1" height="5" fill="#5d5e62"/><rect x="1097" y="2" width="1" height="5" fill="#5d5e62"/><rect x="1103" y="2" width="2" height="8" fill="#6e6f73"/><rect x="1108" y="2" width="1" height="5" fill="#5d5e62"/></svg>
<div class="t" style="left:509.0px;width:40px;text-align:center;top:128px;font-size:10px;color:#6a6b6f;transform:scaleX(0.9)">0</div>
<div class="t" style="left:565.8px;width:40px;text-align:center;top:128px;font-size:10px;color:#6a6b6f;transform:scaleX(0.9)">100</div>
<div class="t" style="left:622.5px;width:40px;text-align:center;top:128px;font-size:10px;color:#6a6b6f;transform:scaleX(0.9)">200</div>
<div class="t" style="left:679.3px;width:40px;text-align:center;top:128px;font-size:10px;color:#6a6b6f;transform:scaleX(0.9)">300</div>
<div class="t" style="left:736.1px;width:40px;text-align:center;top:128px;font-size:10px;color:#6a6b6f;transform:scaleX(0.9)">400</div>
<div class="t" style="left:792.9px;width:40px;text-align:center;top:128px;font-size:10px;color:#6a6b6f;transform:scaleX(0.9)">500</div>
<div class="t" style="left:849.6px;width:40px;text-align:center;top:128px;font-size:10px;color:#6a6b6f;transform:scaleX(0.9)">600</div>
<div class="t" style="left:906.4px;width:40px;text-align:center;top:128px;font-size:10px;color:#6a6b6f;transform:scaleX(0.9)">700</div>
<div class="t" style="left:963.2px;width:40px;text-align:center;top:128px;font-size:10px;color:#6a6b6f;transform:scaleX(0.9)">800</div>
<div class="t" style="left:1019.9px;width:40px;text-align:center;top:128px;font-size:10px;color:#6a6b6f;transform:scaleX(0.9)">900</div>
<div class="t" style="left:1076.7px;width:40px;text-align:center;top:128px;font-size:10px;color:#6a6b6f;transform:scaleX(0.9)">1000</div>
<div class="t" style="left:1133.5px;width:40px;text-align:center;top:128px;font-size:10px;color:#6a6b6f;transform:scaleX(0.9)">1100</div>
<div class="t" style="left:1190.2px;width:40px;text-align:center;top:128px;font-size:10px;color:#6a6b6f;transform:scaleX(0.9)">1200</div>
<div class="t" style="left:1247.0px;width:40px;text-align:center;top:128px;font-size:10px;color:#6a6b6f;transform:scaleX(0.9)">1300</div>
<div class="t" style="left:1303.8px;width:40px;text-align:center;top:128px;font-size:10px;color:#6a6b6f;transform:scaleX(0.9)">1400</div>
<div class="t" style="left:1360.6px;width:40px;text-align:center;top:128px;font-size:10px;color:#6a6b6f;transform:scaleX(0.9)">1500</div>
<div class="t" style="left:1417.3px;width:40px;text-align:center;top:128px;font-size:10px;color:#6a6b6f;transform:scaleX(0.9)">1600</div>
<div class="t" style="left:1474.1px;width:40px;text-align:center;top:128px;font-size:10px;color:#6a6b6f;transform:scaleX(0.9)">1700</div>
<div class="t" style="left:1530.9px;width:40px;text-align:center;top:128px;font-size:10px;color:#6a6b6f;transform:scaleX(0.9)">1800</div>
<div class="t" style="left:1587.6px;width:40px;text-align:center;top:128px;font-size:10px;color:#6a6b6f;transform:scaleX(0.9)">1900</div>
<svg style="left:505px;top:116px" width="12" height="883"><rect x="0" y="20" width="7" height="2" fill="#6e6f73"/><rect x="0" y="26" width="5" height="1" fill="#5d5e62"/><rect x="0" y="32" width="5" height="1" fill="#5d5e62"/><rect x="0" y="37" width="5" height="1" fill="#5d5e62"/><rect x="0" y="43" width="5" height="1" fill="#5d5e62"/><rect x="0" y="49" width="7" height="2" fill="#6e6f73"/><rect x="0" y="55" width="5" height="1" fill="#5d5e62"/><rect x="0" y="60" width="5" height="1" fill="#5d5e62"/><rect x="0" y="66" width="5" height="1" fill="#5d5e62"/><rect x="0" y="72" width="5" height="1" fill="#5d5e62"/><rect x="0" y="77" width="7" height="2" fill="#6e6f73"/><rect x="0" y="83" width="5" height="1" fill="#5d5e62"/><rect x="0" y="89" width="5" height="1" fill="#5d5e62"/><rect x="0" y="94" width="5" height="1" fill="#5d5e62"/><rect x="0" y="100" width="5" height="1" fill="#5d5e62"/><rect x="0" y="106" width="7" height="2" fill="#6e6f73"/><rect x="0" y="753" width="5" height="1" fill="#5d5e62"/><rect x="0" y="758" width="7" height="2" fill="#6e6f73"/><rect x="0" y="764" width="5" height="1" fill="#5d5e62"/><rect x="0" y="770" width="5" height="1" fill="#5d5e62"/><rect x="0" y="776" width="5" height="1" fill="#5d5e62"/><rect x="0" y="781" width="5" height="1" fill="#5d5e62"/><rect x="0" y="787" width="7" height="2" fill="#6e6f73"/><rect x="0" y="793" width="5" height="1" fill="#5d5e62"/><rect x="0" y="798" width="5" height="1" fill="#5d5e62"/><rect x="0" y="804" width="5" height="1" fill="#5d5e62"/><rect x="0" y="810" width="5" height="1" fill="#5d5e62"/><rect x="0" y="815" width="7" height="2" fill="#6e6f73"/><rect x="0" y="821" width="5" height="1" fill="#5d5e62"/><rect x="0" y="827" width="5" height="1" fill="#5d5e62"/><rect x="0" y="832" width="5" height="1" fill="#5d5e62"/><rect x="0" y="838" width="5" height="1" fill="#5d5e62"/><rect x="0" y="844" width="7" height="2" fill="#6e6f73"/><rect x="0" y="849" width="5" height="1" fill="#5d5e62"/><rect x="0" y="855" width="5" height="1" fill="#5d5e62"/><rect x="0" y="861" width="5" height="1" fill="#5d5e62"/><rect x="0" y="866" width="5" height="1" fill="#5d5e62"/><rect x="0" y="872" width="7" height="2" fill="#6e6f73"/><rect x="0" y="878" width="5" height="1" fill="#5d5e62"/></svg>
<div class="t" style="left:500px;top:131.5px;width:40px;height:10px;text-align:center;font-size:10px;color:#6a6b6f;transform:rotate(-90deg) scaleX(0.82)">-200</div>
<div class="t" style="left:500px;top:188.2px;width:40px;height:10px;text-align:center;font-size:10px;color:#6a6b6f;transform:rotate(-90deg) scaleX(0.82)">-100</div>
<div class="t" style="left:500px;top:869.5px;width:40px;height:10px;text-align:center;font-size:10px;color:#6a6b6f;transform:rotate(-90deg) scaleX(0.82)">1100</div>
<div class="t" style="left:500px;top:926.2px;width:40px;height:10px;text-align:center;font-size:10px;color:#6a6b6f;transform:rotate(-90deg) scaleX(0.82)">1200</div>
<div class="t" style="left:500px;top:983.0px;width:40px;height:10px;text-align:center;font-size:10px;color:#6a6b6f;transform:rotate(-90deg) scaleX(0.82)">1300</div>
<div class="a" style="left:505px;top:116px;width:2px;height:2px;background:#bbb"></div>
<div class="a" style="left:529px;top:140px;width:1px;height:85px;background:#9a9a9a"></div>
<div class="a" style="left:529px;top:865px;width:1px;height:133px;background:#9a9a9a"></div>
<div class="a" style="left:505px;top:225px;width:1112px;height:639px;background:#ffffff;overflow:hidden">
<div class="a" style="left:-505px;top:-225px;width:1920px;height:1039px">
<div class="a" style="left:505px;top:225px;width:24px;height:25px;background:#eeeeee"></div>
<svg style="left:512px;top:232px" width="12" height="12"><rect x="0" y="0" width="2" height="2" fill="#9a9a9a"/><rect x="0" y="3" width="2" height="2" fill="#9a9a9a"/><rect x="0" y="6" width="2" height="2" fill="#9a9a9a"/><rect x="0" y="9" width="2" height="2" fill="#9a9a9a"/><rect x="3" y="0" width="2" height="2" fill="#9a9a9a"/><rect x="3" y="3" width="2" height="2" fill="#9a9a9a"/><rect x="3" y="6" width="2" height="2" fill="#9a9a9a"/><rect x="3" y="9" width="2" height="2" fill="#9a9a9a"/><rect x="6" y="0" width="2" height="2" fill="#9a9a9a"/><rect x="6" y="3" width="2" height="2" fill="#9a9a9a"/><rect x="6" y="6" width="2" height="2" fill="#9a9a9a"/><rect x="6" y="9" width="2" height="2" fill="#9a9a9a"/><rect x="9" y="0" width="2" height="2" fill="#9a9a9a"/><rect x="9" y="3" width="2" height="2" fill="#9a9a9a"/><rect x="9" y="6" width="2" height="2" fill="#9a9a9a"/><rect x="9" y="9" width="2" height="2" fill="#9a9a9a"/></svg>
<div class="a" style="left:529px;top:225px;width:72px;height:25px;background:#ecfbec;border-right:1px solid #d8d8d8"></div>
<div class="t" style="left:529px;top:230px;width:72px;text-align:center;font-size:14px;color:#3a3a3a">A</div>
<div class="a" style="left:601px;top:225px;width:72px;height:25px;background:#ecfbec;border-right:1px solid #d8d8d8"></div>
<div class="t" style="left:601px;top:230px;width:72px;text-align:center;font-size:14px;color:#3a3a3a">B</div>
<div class="a" style="left:673px;top:225px;width:72px;height:25px;background:#ecfbec;border-right:1px solid #d8d8d8"></div>
<div class="t" style="left:673px;top:230px;width:72px;text-align:center;font-size:14px;color:#3a3a3a">C</div>
<div class="a" style="left:745px;top:225px;width:72px;height:25px;background:#ecfbec;border-right:1px solid #d8d8d8"></div>
<div class="t" style="left:745px;top:230px;width:72px;text-align:center;font-size:14px;color:#3a3a3a">D</div>
<div class="a" style="left:817px;top:225px;width:72px;height:25px;background:#ecfbec;border-right:1px solid #d8d8d8"></div>
<div class="t" style="left:817px;top:230px;width:72px;text-align:center;font-size:14px;color:#3a3a3a">E</div>
<div class="a" style="left:889px;top:225px;width:72px;height:25px;background:#ecfbec;border-right:1px solid #d8d8d8"></div>
<div class="t" style="left:889px;top:230px;width:72px;text-align:center;font-size:14px;color:#3a3a3a">F</div>
<div class="a" style="left:961px;top:225px;width:72px;height:25px;background:#ecfbec;border-right:1px solid #d8d8d8"></div>
<div class="t" style="left:961px;top:230px;width:72px;text-align:center;font-size:14px;color:#3a3a3a">G</div>
<div class="a" style="left:1033px;top:225px;width:72px;height:25px;background:#ecfbec;border-right:1px solid #d8d8d8"></div>
<div class="t" style="left:1033px;top:230px;width:72px;text-align:center;font-size:14px;color:#3a3a3a">H</div>
<div class="a" style="left:1105px;top:225px;width:72px;height:25px;background:#ecfbec;border-right:1px solid #d8d8d8"></div>
<div class="t" style="left:1105px;top:230px;width:72px;text-align:center;font-size:14px;color:#3a3a3a">I</div>
<div class="a" style="left:1177px;top:225px;width:72px;height:25px;background:#eeeeee;border-right:1px solid #d8d8d8"></div>
<div class="t" style="left:1177px;top:230px;width:72px;text-align:center;font-size:14px;color:#3a3a3a">J</div>
<div class="a" style="left:1249px;top:225px;width:72px;height:25px;background:#eeeeee;border-right:1px solid #d8d8d8"></div>
<div class="t" style="left:1249px;top:230px;width:72px;text-align:center;font-size:14px;color:#3a3a3a">K</div>
<div class="a" style="left:1321px;top:225px;width:72px;height:25px;background:#eeeeee;border-right:1px solid #d8d8d8"></div>
<div class="t" style="left:1321px;top:230px;width:72px;text-align:center;font-size:14px;color:#3a3a3a">L</div>
<div class="a" style="left:1393px;top:225px;width:72px;height:25px;background:#eeeeee;border-right:1px solid #d8d8d8"></div>
<div class="t" style="left:1393px;top:230px;width:72px;text-align:center;font-size:14px;color:#3a3a3a">M</div>
<div class="a" style="left:1465px;top:225px;width:72px;height:25px;background:#eeeeee;border-right:1px solid #d8d8d8"></div>
<div class="t" style="left:1465px;top:230px;width:72px;text-align:center;font-size:14px;color:#3a3a3a">N</div>
<div class="a" style="left:1537px;top:225px;width:72px;height:25px;background:#eeeeee;border-right:1px solid #d8d8d8"></div>
<div class="t" style="left:1537px;top:230px;width:72px;text-align:center;font-size:14px;color:#3a3a3a">O</div>
<div class="a" style="left:673px;top:248px;width:72px;height:2px;background:#107c41"></div>
<svg style="left:529px;top:250px" width="1088" height="614"><rect x="0" y="0" width="1080" height="1" fill="#e2e2e2"/><rect x="0" y="20" width="1080" height="1" fill="#e2e2e2"/><rect x="0" y="40" width="1080" height="1" fill="#e2e2e2"/><rect x="0" y="60" width="1080" height="1" fill="#e2e2e2"/><rect x="0" y="80" width="1080" height="1" fill="#e2e2e2"/><rect x="0" y="100" width="1080" height="1" fill="#e2e2e2"/><rect x="0" y="120" width="1080" height="1" fill="#e2e2e2"/><rect x="0" y="140" width="1080" height="1" fill="#e2e2e2"/><rect x="0" y="160" width="1080" height="1" fill="#e2e2e2"/><rect x="0" y="180" width="1080" height="1" fill="#e2e2e2"/><rect x="0" y="200" width="1080" height="1" fill="#e2e2e2"/><rect x="0" y="220" width="1080" height="1" fill="#e2e2e2"/><rect x="0" y="240" width="1080" height="1" fill="#e2e2e2"/><rect x="0" y="260" width="1080" height="1" fill="#e2e2e2"/><rect x="0" y="280" width="1080" height="1" fill="#e2e2e2"/><rect x="0" y="300" width="1080" height="1" fill="#e2e2e2"/><rect x="0" y="320" width="1080" height="1" fill="#e2e2e2"/><rect x="0" y="340" width="1080" height="1" fill="#e2e2e2"/><rect x="0" y="360" width="1080" height="1" fill="#e2e2e2"/><rect x="0" y="380" width="1080" height="1" fill="#e2e2e2"/><rect x="0" y="400" width="1080" height="1" fill="#e2e2e2"/><rect x="0" y="420" width="1080" height="1" fill="#e2e2e2"/><rect x="0" y="440" width="1080" height="1" fill="#e2e2e2"/><rect x="0" y="460" width="1080" height="1" fill="#e2e2e2"/><rect x="0" y="480" width="1080" height="1" fill="#e2e2e2"/><rect x="0" y="500" width="1080" height="1" fill="#e2e2e2"/><rect x="0" y="520" width="1080" height="1" fill="#e2e2e2"/><rect x="0" y="540" width="1080" height="1" fill="#e2e2e2"/><rect x="0" y="560" width="1080" height="1" fill="#e2e2e2"/><rect x="0" y="580" width="1080" height="1" fill="#e2e2e2"/><rect x="0" y="600" width="1080" height="1" fill="#e2e2e2"/><rect x="0" y="620" width="1080" height="1" fill="#e2e2e2"/><rect x="72" y="0" width="1" height="620" fill="#e2e2e2"/><rect x="144" y="0" width="1" height="620" fill="#e2e2e2"/><rect x="216" y="0" width="1" height="620" fill="#e2e2e2"/><rect x="288" y="0" width="1" height="620" fill="#e2e2e2"/><rect x="360" y="0" width="1" height="620" fill="#e2e2e2"/><rect x="432" y="0" width="1" height="620" fill="#e2e2e2"/><rect x="504" y="0" width="1" height="620" fill="#e2e2e2"/><rect x="576" y="0" width="1" height="620" fill="#e2e2e2"/><rect x="648" y="0" width="1" height="620" fill="#e2e2e2"/><rect x="720" y="0" width="1" height="620" fill="#e2e2e2"/><rect x="792" y="0" width="1" height="620" fill="#e2e2e2"/><rect x="864" y="0" width="1" height="620" fill="#e2e2e2"/><rect x="936" y="0" width="1" height="620" fill="#e2e2e2"/><rect x="1008" y="0" width="1" height="620" fill="#e2e2e2"/><rect x="1080" y="0" width="1" height="620" fill="#e2e2e2"/></svg>
<div class="a" style="left:505px;top:250px;width:24px;height:20px;background:#ecfbec;border-bottom:1px solid #d8d8d8"></div>
<div class="t" style="left:505px;top:254px;width:24px;text-align:center;font-size:13px;color:#444;transform:scaleX(0.85)">1</div>
<div class="a" style="left:505px;top:270px;width:24px;height:20px;background:#ecfbec;border-bottom:1px solid #d8d8d8"></div>
<div class="t" style="left:505px;top:274px;width:24px;text-align:center;font-size:13px;color:#444;transform:scaleX(0.85)">2</div>
<div class="a" style="left:505px;top:290px;width:24px;height:20px;background:#ecfbec;border-bottom:1px solid #d8d8d8"></div>
<div class="t" style="left:505px;top:294px;width:24px;text-align:center;font-size:13px;color:#444;transform:scaleX(0.85)">3</div>
<div class="a" style="left:505px;top:310px;width:24px;height:20px;background:#ecfbec;border-bottom:1px solid #d8d8d8"></div>
<div class="t" style="left:505px;top:314px;width:24px;text-align:center;font-size:13px;color:#444;transform:scaleX(0.85)">4</div>
<div class="a" style="left:505px;top:330px;width:24px;height:20px;background:#ecfbec;border-bottom:1px solid #d8d8d8"></div>
<div class="t" style="left:505px;top:334px;width:24px;text-align:center;font-size:13px;color:#444;transform:scaleX(0.85)">5</div>
<div class="a" style="left:505px;top:350px;width:24px;height:20px;background:#ecfbec;border-bottom:1px solid #d8d8d8"></div>
<div class="t" style="left:505px;top:354px;width:24px;text-align:center;font-size:13px;color:#107c41;transform:scaleX(0.85)">6</div>
<div class="a" style="left:505px;top:370px;width:24px;height:20px;background:#ecfbec;border-bottom:1px solid #d8d8d8"></div>
<div class="t" style="left:505px;top:374px;width:24px;text-align:center;font-size:13px;color:#107c41;transform:scaleX(0.85)">6</div>
<div class="a" style="left:505px;top:390px;width:24px;height:20px;background:#ecfbec;border-bottom:1px solid #d8d8d8"></div>
<div class="t" style="left:505px;top:394px;width:24px;text-align:center;font-size:13px;color:#107c41;transform:scaleX(0.85)">6</div>
<div class="a" style="left:505px;top:410px;width:24px;height:20px;background:#ecfbec;border-bottom:1px solid #d8d8d8"></div>
<div class="t" style="left:505px;top:414px;width:24px;text-align:center;font-size:13px;color:#444;transform:scaleX(0.85)">7</div>
<div class="a" style="left:505px;top:430px;width:24px;height:20px;background:#eeeeee;border-bottom:1px solid #d8d8d8"></div>
<div class="t" style="left:505px;top:434px;width:24px;text-align:center;font-size:13px;color:#444;transform:scaleX(0.85)">8</div>
<div class="a" style="left:505px;top:450px;width:24px;height:20px;background:#eeeeee;border-bottom:1px solid #d8d8d8"></div>
<div class="t" style="left:505px;top:454px;width:24px;text-align:center;font-size:13px;color:#444;transform:scaleX(0.85)">9</div>
<div class="a" style="left:505px;top:470px;width:24px;height:20px;background:#eeeeee;border-bottom:1px solid #d8d8d8"></div>
<div class="t" style="left:505px;top:474px;width:24px;text-align:center;font-size:13px;color:#444;transform:scaleX(0.85)">10</div>
<div class="a" style="left:505px;top:490px;width:24px;height:20px;background:#eeeeee;border-bottom:1px solid #d8d8d8"></div>
<div class="t" style="left:505px;top:494px;width:24px;text-align:center;font-size:13px;color:#444;transform:scaleX(0.85)">11</div>
<div class="a" style="left:505px;top:510px;width:24px;height:20px;background:#eeeeee;border-bottom:1px solid #d8d8d8"></div>
<div class="t" style="left:505px;top:514px;width:24px;text-align:center;font-size:13px;color:#444;transform:scaleX(0.85)">12</div>
<div class="a" style="left:505px;top:530px;width:24px;height:20px;background:#eeeeee;border-bottom:1px solid #d8d8d8"></div>
<div class="t" style="left:505px;top:534px;width:24px;text-align:center;font-size:13px;color:#444;transform:scaleX(0.85)">13</div>
<div class="a" style="left:505px;top:550px;width:24px;height:20px;background:#eeeeee;border-bottom:1px solid #d8d8d8"></div>
<div class="t" style="left:505px;top:554px;width:24px;text-align:center;font-size:13px;color:#444;transform:scaleX(0.85)">14</div>
<div class="a" style="left:505px;top:570px;width:24px;height:20px;background:#eeeeee;border-bottom:1px solid #d8d8d8"></div>
<div class="t" style="left:505px;top:574px;width:24px;text-align:center;font-size:13px;color:#444;transform:scaleX(0.85)">15</div>
<div class="a" style="left:505px;top:590px;width:24px;height:20px;background:#eeeeee;border-bottom:1px solid #d8d8d8"></div>
<div class="t" style="left:505px;top:594px;width:24px;text-align:center;font-size:13px;color:#444;transform:scaleX(0.85)">16</div>
<div class="a" style="left:505px;top:610px;width:24px;height:20px;background:#eeeeee;border-bottom:1px solid #d8d8d8"></div>
<div class="t" style="left:505px;top:614px;width:24px;text-align:center;font-size:13px;color:#444;transform:scaleX(0.85)">17</div>
<div class="a" style="left:505px;top:630px;width:24px;height:20px;background:#eeeeee;border-bottom:1px solid #d8d8d8"></div>
<div class="t" style="left:505px;top:634px;width:24px;text-align:center;font-size:13px;color:#444;transform:scaleX(0.85)">18</div>
<div class="a" style="left:505px;top:650px;width:24px;height:20px;background:#eeeeee;border-bottom:1px solid #d8d8d8"></div>
<div class="t" style="left:505px;top:654px;width:24px;text-align:center;font-size:13px;color:#444;transform:scaleX(0.85)">19</div>
<div class="a" style="left:505px;top:670px;width:24px;height:20px;background:#eeeeee;border-bottom:1px solid #d8d8d8"></div>
<div class="t" style="left:505px;top:674px;width:24px;text-align:center;font-size:13px;color:#444;transform:scaleX(0.85)">20</div>
<div class="a" style="left:505px;top:690px;width:24px;height:20px;background:#eeeeee;border-bottom:1px solid #d8d8d8"></div>
<div class="t" style="left:505px;top:694px;width:24px;text-align:center;font-size:13px;color:#444;transform:scaleX(0.85)">21</div>
<div class="a" style="left:505px;top:710px;width:24px;height:20px;background:#eeeeee;border-bottom:1px solid #d8d8d8"></div>
<div class="t" style="left:505px;top:714px;width:24px;text-align:center;font-size:13px;color:#444;transform:scaleX(0.85)">22</div>
<div class="a" style="left:505px;top:730px;width:24px;height:20px;background:#eeeeee;border-bottom:1px solid #d8d8d8"></div>
<div class="t" style="left:505px;top:734px;width:24px;text-align:center;font-size:13px;color:#444;transform:scaleX(0.85)">23</div>
<div class="a" style="left:505px;top:750px;width:24px;height:20px;background:#eeeeee;border-bottom:1px solid #d8d8d8"></div>
<div class="t" style="left:505px;top:754px;width:24px;text-align:center;font-size:13px;color:#444;transform:scaleX(0.85)">24</div>
<div class="a" style="left:505px;top:770px;width:24px;height:20px;background:#eeeeee;border-bottom:1px solid #d8d8d8"></div>
<div class="t" style="left:505px;top:774px;width:24px;text-align:center;font-size:13px;color:#444;transform:scaleX(0.85)">25</div>
<div class="a" style="left:505px;top:790px;width:24px;height:20px;background:#eeeeee;border-bottom:1px solid #d8d8d8"></div>
<div class="t" style="left:505px;top:794px;width:24px;text-align:center;font-size:13px;color:#444;transform:scaleX(0.85)">26</div>
<div class="a" style="left:505px;top:810px;width:24px;height:20px;background:#eeeeee;border-bottom:1px solid #d8d8d8"></div>
<div class="t" style="left:505px;top:814px;width:24px;text-align:center;font-size:13px;color:#444;transform:scaleX(0.85)">27</div>
<div class="a" style="left:505px;top:830px;width:24px;height:20px;background:#eeeeee;border-bottom:1px solid #d8d8d8"></div>
<div class="t" style="left:505px;top:834px;width:24px;text-align:center;font-size:13px;color:#444;transform:scaleX(0.85)">28</div>
<div class="a" style="left:505px;top:850px;width:24px;height:20px;background:#eeeeee;border-bottom:1px solid #d8d8d8"></div>
<div class="t" style="left:505px;top:854px;width:24px;text-align:center;font-size:13px;color:#444;transform:scaleX(0.85)">29</div>
<div class="a" style="left:529px;top:250px;width:1px;height:614px;background:#c8c8c8"></div>
<div class="a" style="left:527px;top:350px;width:2px;height:60px;background:#107c41"></div>
<div class="a" style="left:529px;top:250px;width:1088px;height:1px;background:#4a86c0"></div>
<div class="t" style="left:673px;top:356px;width:72px;text-align:center;font-size:11px;color:#000;-webkit-text-stroke:0.25px #000"><span style="display:inline-block;transform:scaleX(0.84);margin:0 -2.44px">10001</span></div>
<svg style="left:735px;top:353px" width="8" height="9" viewBox="0 0 8 9"><defs><linearGradient id="ag00" x1="0" y1="0" x2="0" y2="1"><stop offset="0" stop-color="#999"/><stop offset="1" stop-color="#222"/></linearGradient></defs><path d="M4 0 V8.3 M0.8 5 L4 8.3 L7.2 5" fill="none" stroke="url(#ag00)" stroke-width="1.1"/></svg>
<div class="t" style="left:745px;top:356px;width:72px;text-align:center;font-size:11px;color:#000;-webkit-text-stroke:0.25px #000"><span style="display:inline-block;transform:scaleX(0.84);margin:0 -4.88px">2024-01-01</span></div>
<svg style="left:807px;top:353px" width="8" height="9" viewBox="0 0 8 9"><defs><linearGradient id="ag01" x1="0" y1="0" x2="0" y2="1"><stop offset="0" stop-color="#999"/><stop offset="1" stop-color="#222"/></linearGradient></defs><path d="M4 0 V8.3 M0.8 5 L4 8.3 L7.2 5" fill="none" stroke="url(#ag01)" stroke-width="1.1"/></svg>
<div class="t" style="left:817px;top:356px;width:72px;text-align:center;font-size:11px;color:#000;-webkit-text-stroke:0.25px #000"><span style="display:inline-block;transform:scaleX(0.84);margin:0 -4.88px">2024-01-03</span></div>
<svg style="left:879px;top:353px" width="8" height="9" viewBox="0 0 8 9"><defs><linearGradient id="ag02" x1="0" y1="0" x2="0" y2="1"><stop offset="0" stop-color="#999"/><stop offset="1" stop-color="#222"/></linearGradient></defs><path d="M4 0 V8.3 M0.8 5 L4 8.3 L7.2 5" fill="none" stroke="url(#ag02)" stroke-width="1.1"/></svg>
<div class="t" style="left:889px;top:356px;width:72px;text-align:center;font-size:11px;color:#000;-webkit-text-stroke:0.25px #000">西湖路<span style="display:inline-block;transform:scaleX(0.84);margin:0 -1.46px">142</span>号</div>
<svg style="left:951px;top:353px" width="8" height="9" viewBox="0 0 8 9"><defs><linearGradient id="ag03" x1="0" y1="0" x2="0" y2="1"><stop offset="0" stop-color="#999"/><stop offset="1" stop-color="#222"/></linearGradient></defs><path d="M4 0 V8.3 M0.8 5 L4 8.3 L7.2 5" fill="none" stroke="url(#ag03)" stroke-width="1.1"/></svg>
<div class="t" style="left:961px;top:356px;width:72px;text-align:center;font-size:11px;color:#000;-webkit-text-stroke:0.25px #000"><span style="display:inline-block;transform:scaleX(0.84);margin:0 -4.88px">2024-01-05</span></div>
<svg style="left:1023px;top:353px" width="8" height="9" viewBox="0 0 8 9"><defs><linearGradient id="ag04" x1="0" y1="0" x2="0" y2="1"><stop offset="0" stop-color="#999"/><stop offset="1" stop-color="#222"/></linearGradient></defs><path d="M4 0 V8.3 M0.8 5 L4 8.3 L7.2 5" fill="none" stroke="url(#ag04)" stroke-width="1.1"/></svg>
<div class="t" style="left:1033px;top:356px;width:72px;text-align:center;font-size:11px;color:#000;-webkit-text-stroke:0.25px #000"><span style="display:inline-block;transform:scaleX(0.84);margin:0 -1.46px">120</span></div>
<svg style="left:1095px;top:353px" width="8" height="9" viewBox="0 0 8 9"><defs><linearGradient id="ag05" x1="0" y1="0" x2="0" y2="1"><stop offset="0" stop-color="#999"/><stop offset="1" stop-color="#222"/></linearGradient></defs><path d="M4 0 V8.3 M0.8 5 L4 8.3 L7.2 5" fill="none" stroke="url(#ag05)" stroke-width="1.1"/></svg>
<div class="t" style="left:673px;top:376px;width:72px;text-align:center;font-size:11px;color:#000;-webkit-text-stroke:0.25px #000"><span style="display:inline-block;transform:scaleX(0.84);margin:0 -2.44px">10002</span></div>
<svg style="left:735px;top:373px" width="8" height="9" viewBox="0 0 8 9"><defs><linearGradient id="ag10" x1="0" y1="0" x2="0" y2="1"><stop offset="0" stop-color="#999"/><stop offset="1" stop-color="#222"/></linearGradient></defs><path d="M4 0 V8.3 M0.8 5 L4 8.3 L7.2 5" fill="none" stroke="url(#ag10)" stroke-width="1.1"/></svg>
<div class="t" style="left:745px;top:376px;width:72px;text-align:center;font-size:11px;color:#000;-webkit-text-stroke:0.25px #000"><span style="display:inline-block;transform:scaleX(0.84);margin:0 -4.88px">2024-01-03</span></div>
<svg style="left:807px;top:373px" width="8" height="9" viewBox="0 0 8 9"><defs><linearGradient id="ag11" x1="0" y1="0" x2="0" y2="1"><stop offset="0" stop-color="#999"/><stop offset="1" stop-color="#222"/></linearGradient></defs><path d="M4 0 V8.3 M0.8 5 L4 8.3 L7.2 5" fill="none" stroke="url(#ag11)" stroke-width="1.1"/></svg>
<div class="t" style="left:817px;top:376px;width:72px;text-align:center;font-size:11px;color:#000;-webkit-text-stroke:0.25px #000"><span style="display:inline-block;transform:scaleX(0.84);margin:0 -4.88px">2024-01-05</span></div>
<svg style="left:879px;top:373px" width="8" height="9" viewBox="0 0 8 9"><defs><linearGradient id="ag12" x1="0" y1="0" x2="0" y2="1"><stop offset="0" stop-color="#999"/><stop offset="1" stop-color="#222"/></linearGradient></defs><path d="M4 0 V8.3 M0.8 5 L4 8.3 L7.2 5" fill="none" stroke="url(#ag12)" stroke-width="1.1"/></svg>
<div class="t" style="left:889px;top:376px;width:72px;text-align:center;font-size:11px;color:#000;-webkit-text-stroke:0.25px #000">灵隐路<span style="display:inline-block;transform:scaleX(0.84);margin:0 -0.98px">81</span>号</div>
<svg style="left:951px;top:373px" width="8" height="9" viewBox="0 0 8 9"><defs><linearGradient id="ag13" x1="0" y1="0" x2="0" y2="1"><stop offset="0" stop-color="#999"/><stop offset="1" stop-color="#222"/></linearGradient></defs><path d="M4 0 V8.3 M0.8 5 L4 8.3 L7.2 5" fill="none" stroke="url(#ag13)" stroke-width="1.1"/></svg>
<div class="t" style="left:961px;top:376px;width:72px;text-align:center;font-size:11px;color:#000;-webkit-text-stroke:0.25px #000"><span style="display:inline-block;transform:scaleX(0.84);margin:0 -4.88px">2024-01-10</span></div>
<svg style="left:1023px;top:373px" width="8" height="9" viewBox="0 0 8 9"><defs><linearGradient id="ag14" x1="0" y1="0" x2="0" y2="1"><stop offset="0" stop-color="#999"/><stop offset="1" stop-color="#222"/></linearGradient></defs><path d="M4 0 V8.3 M0.8 5 L4 8.3 L7.2 5" fill="none" stroke="url(#ag14)" stroke-width="1.1"/></svg>
<div class="t" style="left:1033px;top:376px;width:72px;text-align:center;font-size:11px;color:#000;-webkit-text-stroke:0.25px #000"><span style="display:inline-block;transform:scaleX(0.84);margin:0 -0.98px">60</span></div>
<svg style="left:1095px;top:373px" width="8" height="9" viewBox="0 0 8 9"><defs><linearGradient id="ag15" x1="0" y1="0" x2="0" y2="1"><stop offset="0" stop-color="#999"/><stop offset="1" stop-color="#222"/></linearGradient></defs><path d="M4 0 V8.3 M0.8 5 L4 8.3 L7.2 5" fill="none" stroke="url(#ag15)" stroke-width="1.1"/></svg>
<div class="t" style="left:673px;top:396px;width:72px;text-align:center;font-size:11px;color:#000;-webkit-text-stroke:0.25px #000"><span style="display:inline-block;transform:scaleX(0.84);margin:0 -2.44px">10003</span></div>
<svg style="left:735px;top:393px" width="8" height="9" viewBox="0 0 8 9"><defs><linearGradient id="ag20" x1="0" y1="0" x2="0" y2="1"><stop offset="0" stop-color="#999"/><stop offset="1" stop-color="#222"/></linearGradient></defs><path d="M4 0 V8.3 M0.8 5 L4 8.3 L7.2 5" fill="none" stroke="url(#ag20)" stroke-width="1.1"/></svg>
<div class="t" style="left:745px;top:396px;width:72px;text-align:center;font-size:11px;color:#000;-webkit-text-stroke:0.25px #000"><span style="display:inline-block;transform:scaleX(0.84);margin:0 -4.88px">2024-01-06</span></div>
<svg style="left:807px;top:393px" width="8" height="9" viewBox="0 0 8 9"><defs><linearGradient id="ag21" x1="0" y1="0" x2="0" y2="1"><stop offset="0" stop-color="#999"/><stop offset="1" stop-color="#222"/></linearGradient></defs><path d="M4 0 V8.3 M0.8 5 L4 8.3 L7.2 5" fill="none" stroke="url(#ag21)" stroke-width="1.1"/></svg>
<div class="t" style="left:817px;top:396px;width:72px;text-align:center;font-size:11px;color:#000;-webkit-text-stroke:0.25px #000"><span style="display:inline-block;transform:scaleX(0.84);margin:0 -4.88px">2024-01-11</span></div>
<svg style="left:879px;top:393px" width="8" height="9" viewBox="0 0 8 9"><defs><linearGradient id="ag22" x1="0" y1="0" x2="0" y2="1"><stop offset="0" stop-color="#999"/><stop offset="1" stop-color="#222"/></linearGradient></defs><path d="M4 0 V8.3 M0.8 5 L4 8.3 L7.2 5" fill="none" stroke="url(#ag22)" stroke-width="1.1"/></svg>
<div class="t" style="left:889px;top:396px;width:72px;text-align:center;font-size:11px;color:#000;-webkit-text-stroke:0.25px #000">登云路<span style="display:inline-block;transform:scaleX(0.84);margin:0 -1.46px">179</span>号</div>
<svg style="left:951px;top:393px" width="8" height="9" viewBox="0 0 8 9"><defs><linearGradient id="ag23" x1="0" y1="0" x2="0" y2="1"><stop offset="0" stop-color="#999"/><stop offset="1" stop-color="#222"/></linearGradient></defs><path d="M4 0 V8.3 M0.8 5 L4 8.3 L7.2 5" fill="none" stroke="url(#ag23)" stroke-width="1.1"/></svg>
<div class="t" style="left:961px;top:396px;width:72px;text-align:center;font-size:11px;color:#000;-webkit-text-stroke:0.25px #000"><span style="display:inline-block;transform:scaleX(0.84);margin:0 -4.88px">2024-01-15</span></div>
<svg style="left:1023px;top:393px" width="8" height="9" viewBox="0 0 8 9"><defs><linearGradient id="ag24" x1="0" y1="0" x2="0" y2="1"><stop offset="0" stop-color="#999"/><stop offset="1" stop-color="#222"/></linearGradient></defs><path d="M4 0 V8.3 M0.8 5 L4 8.3 L7.2 5" fill="none" stroke="url(#ag24)" stroke-width="1.1"/></svg>
<div class="t" style="left:1033px;top:396px;width:72px;text-align:center;font-size:11px;color:#000;-webkit-text-stroke:0.25px #000"><span style="display:inline-block;transform:scaleX(0.84);margin:0 -1.46px">200</span></div>
<svg style="left:1095px;top:393px" width="8" height="9" viewBox="0 0 8 9"><defs><linearGradient id="ag25" x1="0" y1="0" x2="0" y2="1"><stop offset="0" stop-color="#999"/><stop offset="1" stop-color="#222"/></linearGradient></defs><path d="M4 0 V8.3 M0.8 5 L4 8.3 L7.2 5" fill="none" stroke="url(#ag25)" stroke-width="1.1"/></svg>
<div class="a" style="left:1106px;top:370px;width:71px;height:1px;background:#fff"></div>
<div class="a" style="left:1106px;top:390px;width:71px;height:1px;background:#fff"></div>
<div class="a" style="left:673px;top:349px;width:74px;height:22px;border:2px solid #107c41"></div>
<div class="a" style="left:743px;top:367px;width:5px;height:5px;background:#107c41"></div>
<div class="a" style="left:674px;top:371px;width:72px;height:40px;border:1px dashed #2e8b57"></div>
<div class="a" style="left:674px;top:390px;width:72px;height:0;border-top:2px dashed #2e8b57"></div>
<div class="a" style="left:1609px;top:250px;width:8px;height:602px;background:#e3e9ee"></div>
<div class="a" style="left:1610px;top:261px;width:6px;height:582px;background:#c8cdd1;border-radius:3px"></div>
<svg style="left:1610px;top:254px" width="6" height="4"><path d="M0 4 L3 0 L6 4Z" fill="#777"/></svg>
<svg style="left:1610px;top:846px" width="6" height="4"><path d="M0 0 L3 4 L6 0Z" fill="#777"/></svg>
<div class="a" style="left:529px;top:852px;width:1088px;height:12px;background:#e3e9ee"></div>
<div class="a" style="left:542px;top:854px;width:1066px;height:7px;background:#c8cdd1;border-radius:4px"></div>
<svg style="left:532px;top:854px" width="5" height="7"><path d="M5 0 L0 3.5 L5 7Z" fill="#777"/></svg>
<svg style="left:1611px;top:854px" width="5" height="7"><path d="M0 0 L5 3.5 L0 7Z" fill="#777"/></svg>
</div></div>
<div class="a" style="left:529px;top:863px;width:1088px;height:2px;background:#1a7fe0"></div>
<div class="a" style="left:1069px;top:860px;width:10px;height:10px;border-radius:50%;background:#fff;border:2px solid #0a84ff"></div>
<div class="a" style="left:1612px;top:551px;width:9px;height:11px;border-radius:50%;background:#1a8cff"></div>
<div class="t" style="left:1434px;top:975px;font-size:12px;color:#6e6f73">当前选中: 子看板1 &gt; <span style="color:#d0d0d0">中国式报表</span></div>
<div class="a" style="left:505px;top:999px;width:1114px;height:38px;background:#2b2c30"></div>
<div class="a" style="left:505px;top:1037px;width:1114px;height:2px;background:#1e1f22"></div>
<div class="a" style="left:569px;top:999px;width:127px;height:38px;background:#25262a"></div>
<div class="a" style="left:569px;top:999px;width:127px;height:2px;background:#1a8cff"></div>
<div class="a" style="left:568px;top:999px;width:1px;height:38px;background:#232427"></div>
<div class="a" style="left:696px;top:999px;width:1px;height:38px;background:#232427"></div>
<div class="a" style="left:729px;top:999px;width:1px;height:38px;background:#232427"></div>
<div class="a" style="left:792px;top:999px;width:1px;height:38px;background:#232427"></div>
<div class="t" style="left:515px;top:1014px;font-size:12px;color:#e8e8e8">前景</div>
<div class="t" style="left:740px;top:1014px;font-size:12px;color:#e8e8e8">背景</div>
<svg style="left:547.5px;top:1005.5px" width="14" height="14" viewBox="0 0 14 14"><circle cx="7" cy="7" r="6.2" fill="none" stroke="#e0e0e0" stroke-width="1.1"/><path d="M7 3.8 V10.2 M3.8 7 H10.2" stroke="#e0e0e0" stroke-width="1.1"/></svg>
<svg style="left:771.5px;top:1005.5px" width="14" height="14" viewBox="0 0 14 14"><circle cx="7" cy="7" r="6.2" fill="none" stroke="#e0e0e0" stroke-width="1.1"/><path d="M7 3.8 V10.2 M3.8 7 H10.2" stroke="#e0e0e0" stroke-width="1.1"/></svg>
<svg style="left:579px;top:1015px" width="12" height="12" viewBox="0 0 12 12"><path d="M0.8 0.8 H11.2 V8 H0.8 Z M3.5 8 L2.5 11.5 M8.5 8 L9.5 11.5" fill="none" stroke="#1a8cff" stroke-width="1.4"/></svg>
<div class="t" style="left:596px;top:1014px;font-size:12px;color:#1a8cff">子看板1</div>
<svg style="left:707px;top:1013px" width="12" height="12" viewBox="0 0 12 12"><path d="M6 0 V12 M0 6 H12" stroke="#f0f0f0" stroke-width="1.8"/></svg>
<div class="t" style="left:1505px;top:1013px;font-size:11px;color:#d8d8d8;font-weight:bold">56.77%</div>
<svg style="left:1551px;top:1011px" width="16" height="15" viewBox="0 0 16 15"><rect x="0.6" y="0.6" width="14.8" height="13.8" fill="none" stroke="#d8d8d8" stroke-width="1.1"/><path d="M8 3 V12 M3.5 7.5 H12.5" stroke="#d8d8d8" stroke-width="1"/><path d="M6.5 4.3 L8 2.8 L9.5 4.3 M6.5 10.7 L8 12.2 L9.5 10.7 M4.8 6 L3.3 7.5 L4.8 9 M11.2 6 L12.7 7.5 L11.2 9" fill="none" stroke="#d8d8d8" stroke-width="1"/></svg>
<div class="a" style="left:1571px;top:1004px;width:1px;height:28px;background:#3a3b3f"></div>
<svg style="left:1574px;top:1013px" width="19" height="12" viewBox="0 0 19 12"><rect x="0.7" y="0.7" width="17.6" height="10.6" rx="2" fill="none" stroke="#d8d8d8" stroke-width="1.3"/><path d="M3 4 H4.5 M6 4 H7.5 M9 4 H10.5 M12 4 H13.5 M14.5 4 H16 M4 7.5 H15" stroke="#d8d8d8" stroke-width="1.3"/></svg>
<div class="a" style="left:1595px;top:1004px;width:1px;height:28px;background:#3a3b3f"></div>
<svg style="left:1599px;top:1011px" width="16" height="16" viewBox="0 0 16 16"><rect x="0.8" y="0.8" width="14.4" height="14.4" rx="1.2" fill="#45464a" stroke="#c0c0c0" stroke-width="1.6"/><path d="M3.5 5 L6 7.3 L3.5 9.6 M7 10.5 H11.5" fill="none" stroke="#bdbdbd" stroke-width="1.1"/></svg><div class="a" style="left:1619px;top:116px;width:301px;height:883px;background:#242528"></div>
<div class="a" style="left:1619px;top:116px;width:301px;height:1px;background:#3a3b40"></div>
<div class="t" style="left:1649px;top:130px;font-size:13px;color:#e0e0e0">当前状态:<span style="display:inline-block;width:9px"></span>默认状态</div>
<svg style="left:1867px;top:130px" width="13" height="13" viewBox="0 0 13 13"><path d="M6.5 0 V13 M0 6.5 H13" stroke="#e8e8e8" stroke-width="1.6"/></svg>
<svg style="left:1896px;top:133px" width="5" height="8" viewBox="0 0 5 8"><path d="M0.5 0.5 L4 4 L0.5 7.5" stroke="#888" fill="none"/></svg>
<div class="a" style="left:1620px;top:158px;width:298px;height:35px;background:#36373c"></div>
<div class="t" style="left:1637px;top:169px;font-size:12px;color:#e0e0e0">样式</div>
<div class="t" style="left:1677px;top:169px;font-size:12px;color:#e0e0e0">交互</div>
<div class="t" style="left:1717px;top:169px;font-size:12px;color:#e0e0e0">数据</div>
<div class="t" style="left:1757px;top:169px;font-size:12px;color:#e0e0e0">代码</div>
<div class="t" style="left:1797px;top:169px;font-size:12px;color:#e0e0e0">更多</div>
<div class="a" style="left:1629px;top:191px;width:40px;height:2px;background:#1a8cff"></div>
<div class="t" style="left:1629px;top:203px;font-size:14px;color:#fff;-webkit-text-stroke:0.3px #fff">中国式报表</div>
<div class="t" style="left:1704px;top:206px;font-size:11px;color:#9a9a9a;font-weight:bold;transform:scaleX(0.85);transform-origin:left">v0.0.13</div>
<div class="a" style="left:1620px;top:228px;width:298px;height:36px;background:#36373c"></div>
<svg style="left:1632px;top:244px" width="9" height="6"><path d="M0 0 H9 L4.5 6Z" fill="#d8d8d8"/></svg>
<div class="t" style="left:1649px;top:239px;font-size:12px;color:#e8e8e8;font-weight:bold">单元格设置</div>
<svg style="left:1898.5px;top:237.5px" width="4" height="15"><circle cx="2" cy="2" r="1.6" fill="#e0e0e0"/><circle cx="2" cy="7.3" r="1.6" fill="#e0e0e0"/><circle cx="2" cy="12.6" r="1.6" fill="#e0e0e0"/></svg>
<div class="t" style="left:1624px;top:274px;font-size:12px;color:#e0e0e0">鼠标穿透</div>
<svg style="left:1675px;top:274px" width="13" height="13" viewBox="0 0 13 13"><circle cx="6.5" cy="6.5" r="5.8" fill="none" stroke="#d0d0d0" stroke-width="1"/><path d="M4.6 5 Q4.6 3 6.5 3 Q8.4 3 8.4 4.8 Q8.4 6 6.5 6.8 V8" fill="none" stroke="#d0d0d0" stroke-width="1"/><circle cx="6.5" cy="9.8" r="0.7" fill="#d0d0d0"/></svg>
<div class="a" style="left:1724px;top:275px;width:23px;height:10px;border-radius:5px;background:#c9cad0"></div>
<div class="a" style="left:1723px;top:274px;width:12px;height:12px;border-radius:50%;background:#fff"></div>
<div class="a" style="left:1726px;top:277px;width:6px;height:6px;border-radius:50%;border:1px solid #bbb"></div>
<div class="a" style="left:1624px;top:303px;width:290px;height:418px;background:#2c2d31;border:1px solid #46474c"></div>
<svg style="left:1629px;top:317px" width="8" height="5"><path d="M0.5 0.5 L4 4 L7.5 0.5" stroke="#c8c8c8" fill="none"/></svg>
<div class="t" style="left:1643px;top:313px;font-size:12px;color:#e8e8e8;-webkit-text-stroke:0.25px #e8e8e8">单元格 - C6</div>
<div class="t" style="left:1632px;top:347px;font-size:12px;color:#e0e0e0">字体</div>
<div class="a" style="left:1732px;top:341px;width:114px;height:24px;background:#1e1f22;border:1px solid #46474c;border-radius:2px"></div>
<div class="t" style="left:1740px;top:347px;font-size:12px;color:#e0e0e0">系统默认字体</div>
<svg style="left:1826px;top:350px" width="11" height="6"><path d="M0.5 0.5 L5.5 5.5 L10.5 0.5" stroke="#aaa" fill="none"/></svg>
<div class="a" style="left:1851px;top:341px;width:50px;height:24px;background:#1e1f22;border:1px solid #46474c;border-radius:2px"></div>
<div class="t" style="left:1858px;top:348px;font-size:11px;color:#e8e8e8">12</div>
<div class="t" style="left:1883px;top:347px;font-size:11px;color:#8a8a8a">px</div>
<div class="a" style="left:1732px;top:370px;width:40px;height:24px;background:#25262a;border:1px solid #46474c;border-radius:4px"></div>
<div class="a" style="left:1738px;top:375px;width:15px;height:15px;background:#000"></div>
<svg style="left:1756px;top:380px" width="10" height="6"><path d="M0 0 H10 L5 6Z" fill="#e0e0e0"/></svg>
<svg style="left:1787px;top:376px" width="10" height="13" viewBox="0 0 10 13"><path d="M1 0.8 H5.3 Q8.3 0.8 8.3 3.5 Q8.3 6 5.3 6 H1 Z M1 6 H5.8 Q9.2 6 9.2 9 Q9.2 12 5.8 12 H1 Z" fill="none" stroke="#dcdcdc" stroke-width="1.5"/></svg>
<svg style="left:1820px;top:376px" width="11" height="13" viewBox="0 0 11 13"><path d="M4 0.8 H10 M0 12 H6 M7 0.8 L3 12" fill="none" stroke="#dcdcdc" stroke-width="1.3"/></svg>
<svg style="left:1852px;top:376px" width="10" height="13" viewBox="0 0 10 13"><path d="M1 0.2 V6.5 Q1 9.6 5 9.6 Q9 9.6 9 6.5 V0.2 M0 12 H10" fill="none" stroke="#dcdcdc" stroke-width="1.4"/></svg>
<svg style="left:1882px;top:376px" width="14" height="13" viewBox="0 0 14 13"><path d="M10.3 2.6 Q9.3 0.7 7 0.7 Q3.6 0.7 3.6 3.2 Q3.6 5.2 7 6 Q10.6 7 10.6 9.3 Q10.6 12.2 7 12.2 Q4.3 12.2 3.4 10.2 M0 6.4 H14" fill="none" stroke="#dcdcdc" stroke-width="1.4"/></svg>
<div class="t" style="left:1632px;top:410px;font-size:12px;color:#e0e0e0">文字排列</div>
<div class="a" style="left:1732px;top:404px;width:169px;height:24px;background:#1e1f22;border:1px solid #46474c;border-radius:2px"></div>
<div class="t" style="left:1740px;top:409px;font-size:12px;color:#e0e0e0">自定义角度</div>
<svg style="left:1881px;top:413px" width="11" height="6"><path d="M0.5 0.5 L5.5 5.5 L10.5 0.5" stroke="#aaa" fill="none"/></svg>
<div class="t" style="left:1632px;top:443px;font-size:12px;color:#e0e0e0">文字旋转</div>
<div class="a" style="left:1732px;top:447px;width:93px;height:5px;border-radius:3px;background:#3a3b40"></div>
<div class="a" style="left:1732px;top:447px;width:48px;height:5px;border-radius:3px;background:#1a8cff"></div>
<div class="a" style="left:1773px;top:443px;width:14px;height:14px;border-radius:50%;background:#fff;border:2px solid #1a8cff"></div>
<div class="a" style="left:1837px;top:438px;width:64px;height:24px;background:#1e1f22;border:1px solid #46474c;border-radius:2px"></div>
<div class="t" style="left:1862px;top:444px;font-size:12px;color:#e8e8e8;font-weight:bold">0</div>
<div class="t" style="left:1891px;top:441px;font-size:9px;color:#bbb">°</div>
<div class="t" style="left:1632px;top:477px;font-size:12px;color:#e0e0e0">文字间隔</div>
<div class="a" style="left:1732px;top:472px;width:169px;height:24px;background:#1e1f22;border:1px solid #46474c;border-radius:2px"></div>
<div class="t" style="left:1739px;top:478px;font-size:12px;color:#e8e8e8;font-weight:bold">0</div>
<div class="t" style="left:1883px;top:478px;font-size:11px;color:#8a8a8a">px</div>
<div class="t" style="left:1632px;top:511px;font-size:12px;color:#e0e0e0">文字缩进</div>
<div class="a" style="left:1732px;top:506px;width:169px;height:24px;background:#1e1f22;border:1px solid #46474c;border-radius:2px"></div>
<div class="t" style="left:1739px;top:512px;font-size:12px;color:#e8e8e8;font-weight:bold">0</div>
<div class="t" style="left:1883px;top:512px;font-size:11px;color:#8a8a8a">px</div>
<div class="t" style="left:1632px;top:546px;font-size:12px;color:#e0e0e0">水平对齐方式</div>
<div class="a" style="left:1732px;top:541px;width:169px;height:23px;background:#25262a;border:1px solid #46474c;border-radius:2px"></div>
<div class="t" style="left:1732px;top:547px;width:55px;text-align:center;font-size:11px;color:#f0f0f0">左对齐</div>
<div class="a" style="left:1787px;top:541px;width:58px;height:23px;background:#0a84ff"></div>
<div class="t" style="left:1787px;top:547px;width:58px;text-align:center;font-size:11px;color:#f0f0f0">居中对齐</div>
<div class="t" style="left:1845px;top:547px;width:56px;text-align:center;font-size:11px;color:#f0f0f0">右对齐</div>
<div class="t" style="left:1632px;top:580px;font-size:12px;color:#e0e0e0">竖直对齐方式</div>
<div class="a" style="left:1732px;top:575px;width:169px;height:23px;background:#25262a;border:1px solid #46474c;border-radius:2px"></div>
<div class="t" style="left:1732px;top:581px;width:55px;text-align:center;font-size:11px;color:#f0f0f0">顶部对齐</div>
<div class="a" style="left:1787px;top:575px;width:58px;height:23px;background:#0a84ff"></div>
<div class="t" style="left:1787px;top:581px;width:58px;text-align:center;font-size:11px;color:#f0f0f0">居中对齐</div>
<div class="t" style="left:1845px;top:581px;width:56px;text-align:center;font-size:11px;color:#f0f0f0">底部对齐</div>
<div class="a" style="left:1632px;top:608px;width:274px;height:34px;background:#222326;border:1px solid #46474c;border-radius:2px"></div>
<svg style="left:1640px;top:620px" width="5" height="9"><path d="M0.5 0.5 L4.5 4.5 L0.5 8.5" stroke="#c8c8c8" fill="none"/></svg>
<div class="t" style="left:1651px;top:619px;font-size:12px;color:#e0e0e0">文字发光</div>
<div class="a" style="left:1632px;top:647px;width:274px;height:34px;background:#222326;border:1px solid #46474c;border-radius:2px"></div>
<svg style="left:1640px;top:659px" width="5" height="9"><path d="M0.5 0.5 L4.5 4.5 L0.5 8.5" stroke="#c8c8c8" fill="none"/></svg>
<div class="t" style="left:1651px;top:658px;font-size:12px;color:#e0e0e0">边框设置</div>
<div class="t" style="left:1632px;top:697px;font-size:12px;color:#e0e0e0">背景颜色</div>
<div class="a" style="left:1732px;top:690px;width:40px;height:24px;background:#25262a;border:1px solid #46474c;border-radius:4px"></div>
<div class="a" style="left:1738px;top:695px;width:15px;height:15px;background:#fff"></div>
<svg style="left:1756px;top:700px" width="10" height="6"><path d="M0 0 H10 L5 6Z" fill="#e0e0e0"/></svg>
<div class="a" style="left:1620px;top:726px;width:298px;height:36px;background:#36373c"></div>
<svg style="left:1634px;top:740.0px" width="6" height="8"><path d="M0 0 L6 4 L0 8Z" fill="#d8d8d8"/></svg>
<div class="t" style="left:1649px;top:738.0px;font-size:12px;color:#e8e8e8;font-weight:bold">表格设置</div>
<div class="a" style="left:1620px;top:762px;width:298px;height:1px;background:#1c1d20"></div>
<svg style="left:1898.5px;top:736.5px" width="4" height="15"><circle cx="2" cy="2" r="1.6" fill="#e0e0e0"/><circle cx="2" cy="7.3" r="1.6" fill="#e0e0e0"/><circle cx="2" cy="12.6" r="1.6" fill="#e0e0e0"/></svg>
<div class="a" style="left:1620px;top:763px;width:298px;height:36px;background:#36373c"></div>
<svg style="left:1634px;top:777.0px" width="6" height="8"><path d="M0 0 L6 4 L0 8Z" fill="#d8d8d8"/></svg>
<div class="t" style="left:1649px;top:775.0px;font-size:12px;color:#e8e8e8;font-weight:bold">大小&位置</div>
<div class="a" style="left:1620px;top:799px;width:298px;height:1px;background:#1c1d20"></div>
<svg style="left:1894px;top:773px" width="13" height="15" viewBox="0 0 13 15"><path d="M3 6.5 V4 Q3 0.7 6.5 0.7 Q10 0.7 10 4 V6.5" fill="none" stroke="#d0d0d0" stroke-width="1.2"/><rect x="0.7" y="6.5" width="11.6" height="7.8" rx="1" fill="none" stroke="#d0d0d0" stroke-width="1.2"/><path d="M6.5 9 V11.5" stroke="#d0d0d0" stroke-width="1.2"/></svg>
<div class="a" style="left:1620px;top:800px;width:298px;height:36px;background:#36373c"></div>
<svg style="left:1634px;top:814.0px" width="6" height="8"><path d="M0 0 L6 4 L0 8Z" fill="#d8d8d8"/></svg>
<div class="t" style="left:1649px;top:812.0px;font-size:12px;color:#e8e8e8;font-weight:bold">响应式布局</div>
<div class="a" style="left:1620px;top:836px;width:298px;height:1px;background:#1c1d20"></div>
<svg style="left:1898.5px;top:810.5px" width="4" height="15"><circle cx="2" cy="2" r="1.6" fill="#e0e0e0"/><circle cx="2" cy="7.3" r="1.6" fill="#e0e0e0"/><circle cx="2" cy="12.6" r="1.6" fill="#e0e0e0"/></svg>
<div class="a" style="left:1620px;top:837px;width:298px;height:36px;background:#36373c"></div>
<svg style="left:1634px;top:851.0px" width="6" height="8"><path d="M0 0 L6 4 L0 8Z" fill="#6a6a6a"/></svg>
<div class="t" style="left:1649px;top:849.0px;font-size:12px;color:#7a7a7a;font-weight:bold">边框设置</div>
<div class="a" style="left:1620px;top:873px;width:298px;height:1px;background:#1c1d20"></div>
<div class="a" style="left:1865px;top:850px;width:23px;height:10px;border-radius:5px;background:#c9cad0"></div>
<div class="a" style="left:1864px;top:849px;width:12px;height:12px;border-radius:50%;background:#fff"></div>
<div class="a" style="left:1867px;top:852px;width:6px;height:6px;border-radius:50%;border:1px solid #bbb"></div>
<svg style="left:1898.5px;top:847.5px" width="4" height="15"><circle cx="2" cy="2" r="1.6" fill="#6a6a6a"/><circle cx="2" cy="7.3" r="1.6" fill="#6a6a6a"/><circle cx="2" cy="12.6" r="1.6" fill="#6a6a6a"/></svg>
<div class="a" style="left:1620px;top:874px;width:298px;height:36px;background:#36373c"></div>
<svg style="left:1634px;top:888.0px" width="6" height="8"><path d="M0 0 L6 4 L0 8Z" fill="#d8d8d8"/></svg>
<div class="t" style="left:1649px;top:886.0px;font-size:12px;color:#e8e8e8;font-weight:bold">背景设置</div>
<div class="a" style="left:1620px;top:910px;width:298px;height:1px;background:#1c1d20"></div>
<div class="a" style="left:1865px;top:887px;width:23px;height:10px;border-radius:5px;background:#1a8cff"></div>
<div class="a" style="left:1877px;top:886px;width:12px;height:12px;border-radius:50%;background:#fff"></div>
<div class="a" style="left:1882.5px;top:889px;width:1px;height:6px;background:#1a8cff"></div>
<svg style="left:1898.5px;top:884.5px" width="4" height="15"><circle cx="2" cy="2" r="1.6" fill="#e0e0e0"/><circle cx="2" cy="7.3" r="1.6" fill="#e0e0e0"/><circle cx="2" cy="12.6" r="1.6" fill="#e0e0e0"/></svg>
<div class="a" style="left:1620px;top:911px;width:298px;height:36px;background:#36373c"></div>
<svg style="left:1634px;top:925.0px" width="6" height="8"><path d="M0 0 L6 4 L0 8Z" fill="#d8d8d8"/></svg>
<div class="t" style="left:1649px;top:923.0px;font-size:12px;color:#e8e8e8;font-weight:bold">组件封面</div>
<div class="a" style="left:1620px;top:947px;width:298px;height:1px;background:#1c1d20"></div>
<svg style="left:1898.5px;top:921.5px" width="4" height="15"><circle cx="2" cy="2" r="1.6" fill="#e0e0e0"/><circle cx="2" cy="7.3" r="1.6" fill="#e0e0e0"/><circle cx="2" cy="12.6" r="1.6" fill="#e0e0e0"/></svg>
<div class="a" style="left:1619px;top:999px;width:301px;height:40px;background:#303136"></div>
<div class="t" style="left:1622px;top:1002px;font-size:11px;color:#f0f0f0"><span style="font-size:12px">内存:</span><span style="font-weight:bold;display:inline-block;transform:scaleX(0.8);transform-origin:left;word-spacing:2.5px;margin-left:11px">155 / 3934 / 4096 MB&nbsp; 17 / 172 MB</span></div>
<div class="t" style="left:1622px;top:1022px;font-size:11px;color:#f0f0f0"><span style="font-size:12px">组件数:</span><span style="font-weight:bold;display:inline-block;transform:scaleX(0.8);transform-origin:left;word-spacing:2px">1 / 1</span></div>
<div class="t" style="left:1872px;top:1003px;font-size:11px;color:#f0f0f0;font-weight:bold;transform:scaleX(0.85);transform-origin:left">FPS:&nbsp;&nbsp;&nbsp;&nbsp; 60</div>
<div class="t" style="left:1893px;top:1023px;font-size:11px;color:#f0f0f0;font-weight:bold;transform:scaleX(0.85);transform-origin:left">4.3.0</div>
<div class="a" style="left:0;top:1037px;width:1920px;height:2px;background:#1e1f22"></div>
<div class="a" style="left:1617px;top:155px;width:303px;height:795px;border:3px solid #ff0000;border-right-width:2px"></div>
<svg style="left:0;top:0" width="1920" height="1039"><path d="M1478 58 L1601 141" stroke="#ff0000" stroke-width="4" stroke-linecap="round"/><path d="M1613 149 L1595.5 146 L1604 133.5 Z" fill="#ff0000"/></svg></body></html>
